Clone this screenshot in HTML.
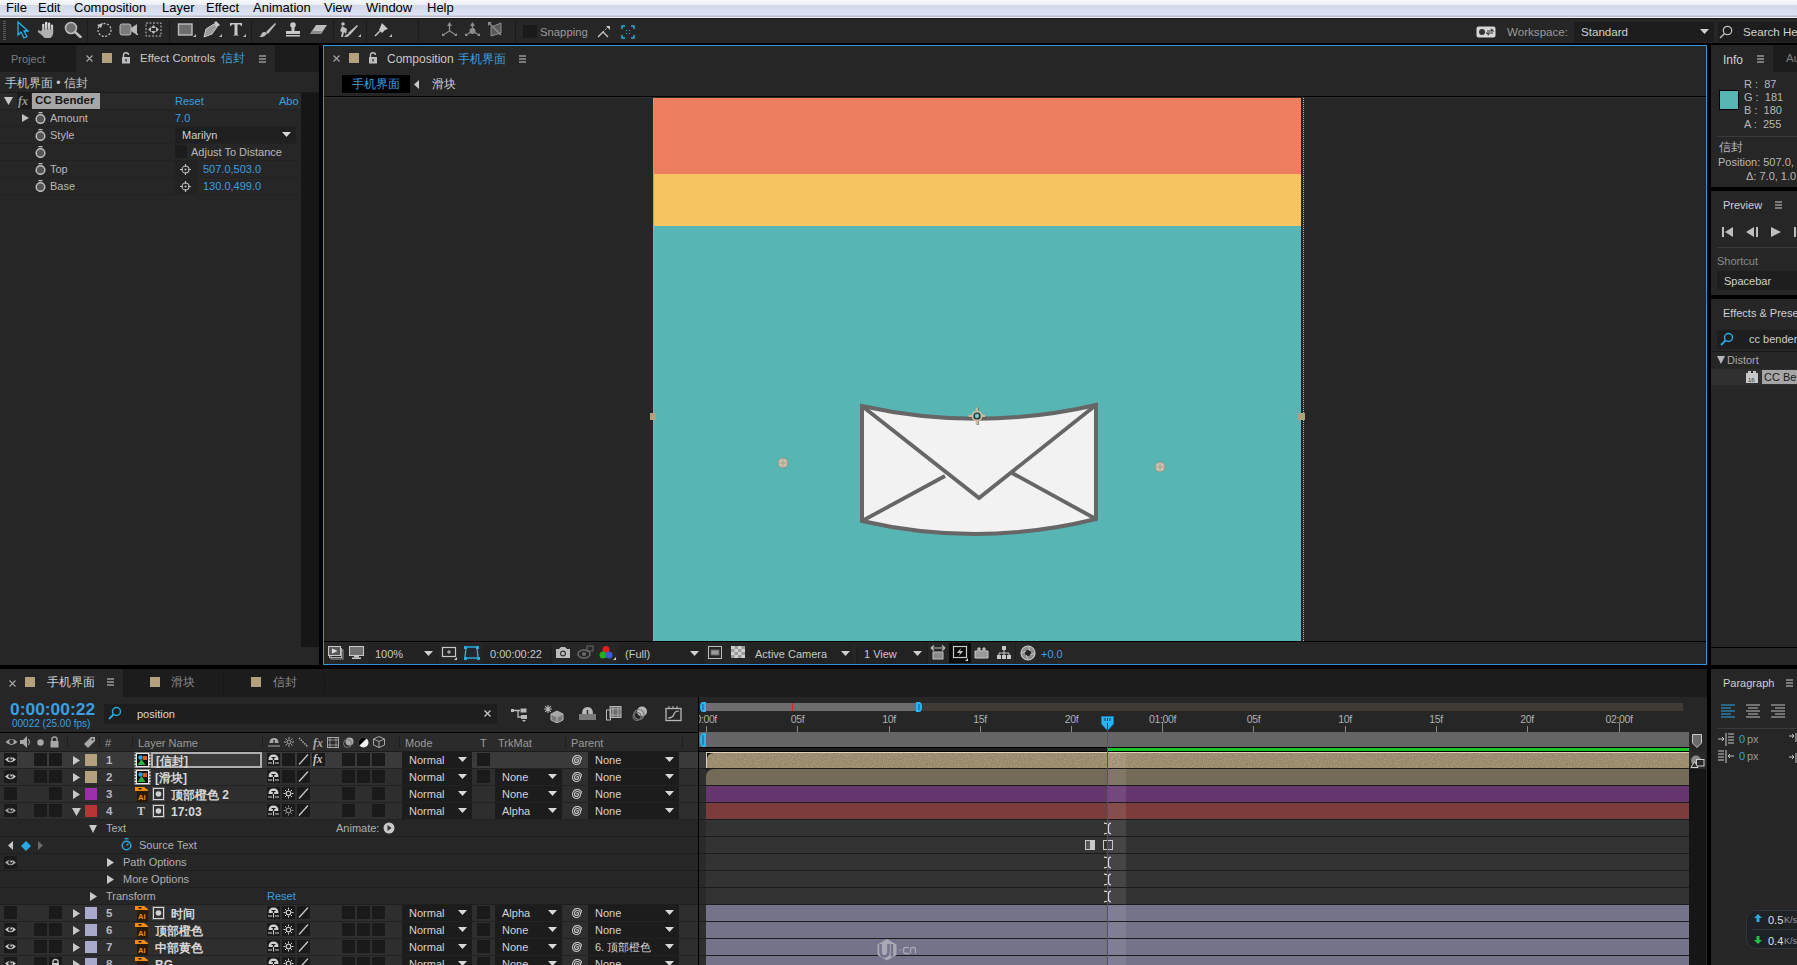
<!DOCTYPE html>
<html><head><meta charset="utf-8">
<style>
*{margin:0;padding:0;box-sizing:border-box}
html,body{width:1797px;height:965px;overflow:hidden;background:#000;font-family:"Liberation Sans",sans-serif;font-size:11px;color:#b4b4b4}
.a{position:absolute;display:block}
.t{position:absolute;white-space:nowrap;line-height:1}
</style></head><body>
<div class="a" style="left:0;top:0;width:1797px;height:18px;background:linear-gradient(#f8f9fd 0px,#eceef7 4.5px,#d4d9ea 5.2px,#dde2f2 15px,#b9bed0 16px,#b9bed0 17px)"></div>
<div class="a" style="left:0px;top:17px;width:1797px;height:1px;background:#f2f2f2;"></div>
<div class="a" style="left:0px;top:18px;width:1797px;height:1px;background:#1b1b1b;"></div>
<span class="t " style="left:6px;top:1.26px;font-size:13px;color:#000;">File</span>
<span class="t " style="left:38px;top:1.26px;font-size:13px;color:#000;">Edit</span>
<span class="t " style="left:74px;top:1.26px;font-size:13px;color:#000;">Composition</span>
<span class="t " style="left:162px;top:1.26px;font-size:13px;color:#000;">Layer</span>
<span class="t " style="left:206px;top:1.26px;font-size:13px;color:#000;">Effect</span>
<span class="t " style="left:253px;top:1.26px;font-size:13px;color:#000;">Animation</span>
<span class="t " style="left:324px;top:1.26px;font-size:13px;color:#000;">View</span>
<span class="t " style="left:366px;top:1.26px;font-size:13px;color:#000;">Window</span>
<span class="t " style="left:427px;top:1.26px;font-size:13px;color:#000;">Help</span>
<div class="a" style="left:0px;top:19px;width:1797px;height:24px;background:#262626;"></div>
<div class="a" style="left:0px;top:43px;width:1797px;height:2px;background:#000;"></div>
<div class="a" style="left:3px;top:21px;width:3px;height:20px;background:repeating-linear-gradient(#5a5a5a 0 1px,transparent 1px 2px)"></div>
<svg class="a" style="left:16px;top:21px;" width="13" height="18" viewBox="0 0 13 18"><path d="M2 1L2 14L5 11L8 17L11 15.5L8 10L12 10Z" fill="#11242c" stroke="#28b4e8" stroke-width="1.3"/></svg>
<svg class="a" style="left:37px;top:21px;" width="19" height="18" viewBox="0 0 19 18"><defs><linearGradient id="hg" x1="0" y1="0" x2="0" y2="1"><stop offset="0" stop-color="#e4e4e4"/><stop offset="1" stop-color="#9a9a9a"/></linearGradient></defs><g stroke="url(#hg)" stroke-linecap="round" fill="none" stroke-width="2.3"><path d="M6.3 9V3.8M9.2 8.5V1.8M12.1 8.5V2.6M15 9.5V4.6M2 10.5L5.5 13"/></g><path d="M4.8 8.5H16.2V12.5Q15.5 16 13.5 17H7.5L3.5 12.5Z" fill="#b0b0b0"/></svg>
<svg class="a" style="left:64px;top:21px;" width="18" height="17" viewBox="0 0 18 17"><circle cx="7" cy="7" r="5.5" fill="#707070" stroke="#bdbdbd" stroke-width="1.6"/><path d="M11 11L16.5 16" stroke="#bdbdbd" stroke-width="2.6" stroke-linecap="round"/></svg>
<div class="a" style="left:87px;top:20px;width:1px;height:22px;background:#1a1a1a;"></div>
<svg class="a" style="left:96px;top:21px;" width="17" height="17" viewBox="0 0 17 17"><circle cx="8.5" cy="9" r="6.5" fill="none" stroke="#bdbdbd" stroke-width="1.3" stroke-dasharray="2 1.6"/><path d="M1 4L7 2L5 7Z" fill="#bdbdbd"/></svg>
<svg class="a" style="left:119px;top:22px;" width="20" height="15" viewBox="0 0 20 15"><rect x="1" y="2" width="11" height="11" rx="2" fill="#7a7a7a" stroke="#b8b8b8"/><path d="M12 6L18 2V13L12 9Z" fill="#b8b8b8"/><path d="M17 13H19V11Z" fill="#bbb"/></svg>
<svg class="a" style="left:145px;top:22px;" width="18" height="16" viewBox="0 0 18 16"><rect x="1" y="1" width="15" height="13" fill="none" stroke="#bdbdbd" stroke-dasharray="2 1.5"/><path d="M8.5 3L11 6H6ZM8.5 12L11 9H6ZM3 7.5L6 5V10ZM14 7.5L11 5V10Z" fill="#bdbdbd"/></svg>
<div class="a" style="left:169px;top:20px;width:1px;height:22px;background:#1a1a1a;"></div>
<svg class="a" style="left:177px;top:22px;" width="19" height="16" viewBox="0 0 19 16"><rect x="1.5" y="2" width="13.5" height="11" fill="#6e6e6e" stroke="#bdbdbd" stroke-width="1.4"/><path d="M16 15H19V12Z" fill="#bbb"/></svg>
<svg class="a" style="left:202px;top:21px;" width="20" height="17" viewBox="0 0 20 17"><path d="M2 16L4 8L12 3L15 6L10 13Z" fill="#9a9a9a" stroke="#c8c8c8" stroke-width="1"/><path d="M12 2L14 0L18 4L15 6Z" fill="#c8c8c8"/><path d="M17 16H20V13Z" fill="#bbb"/></svg>
<svg class="a" style="left:228px;top:21px;" width="18" height="17" viewBox="0 0 18 17"><path d="M2 2H14V5H13L12 3.5H9.5V13.5L11 14.5H5L6.5 13.5V3.5H4L3 5H2Z" fill="#c8c8c8"/><path d="M15 16H18V13Z" fill="#bbb"/></svg>
<div class="a" style="left:251px;top:20px;width:1px;height:22px;background:#1a1a1a;"></div>
<svg class="a" style="left:258px;top:21px;" width="20" height="17" viewBox="0 0 20 17"><path d="M8 11L17 2L18 3L10 13Z" fill="#bdbdbd"/><path d="M1 16Q3 15 4 12Q6 10 9 12Q8 15 4 16Z" fill="#bdbdbd"/></svg>
<svg class="a" style="left:284px;top:21px;" width="18" height="17" viewBox="0 0 18 17"><circle cx="9" cy="4" r="2.8" fill="#c8c8c8"/><rect x="7.5" y="6" width="3" height="5" fill="#c8c8c8"/><rect x="2" y="10" width="14" height="3" fill="#c8c8c8"/><rect x="2" y="14" width="14" height="1.5" fill="#c8c8c8"/></svg>
<svg class="a" style="left:309px;top:22px;" width="19" height="15" viewBox="0 0 19 15"><path d="M1 12L7 3H18L12 12Z" fill="#bdbdbd"/><path d="M1 12L3 9H13L12 12Z" fill="#8a8a8a"/></svg>
<div class="a" style="left:333px;top:20px;width:1px;height:22px;background:#1a1a1a;"></div>
<svg class="a" style="left:338px;top:21px;" width="23" height="17" viewBox="0 0 23 17"><circle cx="5" cy="3" r="1.8" fill="#bdbdbd"/><path d="M4 5L2 10L4 11L3 16L5 16L6 11L8 13L9 8Z" fill="#bdbdbd"/><path d="M10 12L19 4L20 5L12 14Z" fill="#bdbdbd"/><path d="M6 16Q9 12 12 13Q11 16 8 16Z" fill="#bdbdbd"/><path d="M20 16H23V13Z" fill="#bbb"/></svg>
<div class="a" style="left:366px;top:20px;width:1px;height:22px;background:#1a1a1a;"></div>
<svg class="a" style="left:373px;top:21px;" width="19" height="17" viewBox="0 0 19 17"><path d="M9 2L15 8L12 9L9 12L6 9Z" fill="#c8c8c8"/><path d="M7 10L2 15" stroke="#c8c8c8" stroke-width="1.5"/><path d="M16 16H19V13Z" fill="#bbb"/></svg>
<div class="a" style="left:418px;top:20px;width:1px;height:22px;background:#1a1a1a;"></div>
<svg class="a" style="left:441px;top:22px;" width="17" height="15" viewBox="0 0 17 15"><path d="M8.5 1V9M8.5 9L2 13M8.5 9L15 13" stroke="#8d8d8d" stroke-width="1.3" fill="none"/><path d="M6 4L8.5 0L11 4Z" fill="#8d8d8d"/><path d="M1 11V14H4ZM16 11V14H13Z" fill="#8d8d8d"/></svg>
<svg class="a" style="left:464px;top:22px;" width="17" height="15" viewBox="0 0 17 15"><path d="M8.5 1V9M8.5 9L2 13M8.5 9L15 13" stroke="#8d8d8d" stroke-width="1.3" fill="none"/><path d="M6 4L8.5 0L11 4Z" fill="#8d8d8d"/><circle cx="8.5" cy="9" r="3" fill="#8d8d8d"/><path d="M1 11V14H4ZM16 11V14H13Z" fill="#8d8d8d"/></svg>
<svg class="a" style="left:488px;top:22px;" width="16" height="15" viewBox="0 0 16 15"><path d="M3 5L13 1V11L3 14Z" fill="#5a5a5a" stroke="#8d8d8d"/><path d="M1 1L13 13" stroke="#8d8d8d" stroke-width="1.4"/><path d="M0 0H4L0 4Z" fill="#8d8d8d"/></svg>
<div class="a" style="left:515px;top:20px;width:1px;height:22px;background:#1a1a1a;"></div>
<div class="a" style="left:523px;top:25px;width:14px;height:13px;background:#1a1a1a;"></div>
<span class="t " style="left:540px;top:27.08px;font-size:11.3px;color:#9a9a9a;">Snapping</span>
<svg class="a" style="left:597px;top:25px;" width="14" height="13" viewBox="0 0 14 13"><path d="M1 12L6 7L11 12" stroke="#c8c8c8" stroke-width="1.3" fill="none"/><path d="M6 7L12 1" stroke="#c8c8c8" stroke-width="1" stroke-dasharray="1.5 1"/><path d="M9 1H13V5Z" fill="#c8c8c8"/></svg>
<svg class="a" style="left:621px;top:25px;" width="14" height="14" viewBox="0 0 14 14"><path d="M1 4V1H4M10 1H13V4M13 10V13H10M4 13H1V10" stroke="#2aa8e0" stroke-width="1.5" fill="none"/><path d="M5 5L6 6M9 5L8 6M5 9L6 8M9 9L8 8" stroke="#2aa8e0" stroke-width="1"/></svg>
<svg class="a" style="left:1476px;top:26px;" width="20" height="12" viewBox="0 0 20 12"><rect x="0.5" y="0.5" width="19" height="11" rx="2" fill="#d6d6d6"/><circle cx="6" cy="6" r="3" fill="#333"/><path d="M11 5H17L15 3M17 7H11L13 9" stroke="#333" stroke-width="1.2" fill="none"/></svg>
<span class="t " style="left:1507px;top:25.93px;font-size:11.6px;color:#9a9a9a;">Workspace:</span>
<div class="a" style="left:1574px;top:22px;width:140px;height:20px;background:#1d1d1d;"></div>
<span class="t " style="left:1581px;top:25.93px;font-size:11.6px;color:#d0d0d0;">Standard</span>
<svg class="a" style="left:1700px;top:29px;" width="9" height="5" viewBox="0 0 9 5"><path d="M0 0H9L4.5 5Z" fill="#d0d0d0"/></svg>
<div class="a" style="left:1718px;top:22px;width:79px;height:20px;background:#1d1d1d;"></div>
<svg class="a" style="left:1719px;top:25px;" width="14" height="14" viewBox="0 0 14 14"><circle cx="8.5" cy="5.5" r="4.2" fill="none" stroke="#bdbdbd" stroke-width="1.3"/><path d="M5.5 8.5L1 13" stroke="#bdbdbd" stroke-width="1.5"/></svg>
<span class="t " style="left:1743px;top:25.73px;font-size:11.6px;color:#d0d0d0;">Search Help</span>
<div class="a" style="left:0px;top:45px;width:319px;height:620px;background:#262626;"></div>
<div class="a" style="left:0px;top:45px;width:76px;height:27px;background:#1c1c1c;"></div>
<div class="a" style="left:76px;top:45px;width:199px;height:27px;background:#262626;"></div>
<div class="a" style="left:275px;top:45px;width:44px;height:27px;background:#1c1c1c;"></div>
<span class="t " style="left:11px;top:53.72px;font-size:11px;color:#7c7c7c;">Project</span>
<svg class="a" style="left:86px;top:55px;" width="7" height="7" viewBox="0 0 7 7"><path d="M0.5 0.5L6.5 6.5M6.5 0.5L0.5 6.5" stroke="#a8a8a8" stroke-width="1.1"/></svg>
<div class="a" style="left:102px;top:53px;width:10px;height:10px;background:#b4a07c;"></div>
<svg class="a" style="left:121px;top:52px;" width="10" height="12" viewBox="0 0 10 12"><path d="M2.5 5V3Q2.5 0.8 5 0.8Q7.5 0.8 7.5 3" fill="none" stroke="#bdbdbd" stroke-width="1.4"/><rect x="1" y="5" width="8" height="6.5" fill="#bdbdbd"/><rect x="4.3" y="7" width="1.4" height="2.5" fill="#333"/></svg>
<span class="t " style="left:140px;top:53.48px;font-size:11.5px;color:#c8c8c8;">Effect Controls</span>
<span class="t " style="left:221px;top:53.48px;font-size:11.5px;color:#3a9fe0;">信封</span>
<svg class="a" style="left:259px;top:55px;" width="7" height="8" viewBox="0 0 7 8"><path d="M0 1H7M0 4H7M0 7H7" stroke="#d0d0d0" stroke-width="1.1"/></svg>
<span class="t " style="left:5px;top:77.24px;font-size:12px;color:#c8c8c8;">手机界面 • 信封</span>
<div class="a" style="left:0px;top:92px;width:319px;height:1px;background:#1a1a1a;"></div>
<div class="a" style="left:301px;top:93px;width:18px;height:554px;background:#161616;"></div>
<div class="a" style="left:0px;top:93px;width:301px;height:16px;background:#2a2a2a;"></div>
<div class="a" style="left:0px;top:109px;width:301px;height:1px;background:#222222;"></div>
<div class="a" style="left:0px;top:110px;width:301px;height:16px;background:#262626;"></div>
<div class="a" style="left:0px;top:126px;width:301px;height:1px;background:#222222;"></div>
<div class="a" style="left:0px;top:127px;width:301px;height:16px;background:#262626;"></div>
<div class="a" style="left:0px;top:143px;width:301px;height:1px;background:#222222;"></div>
<div class="a" style="left:0px;top:144px;width:301px;height:16px;background:#262626;"></div>
<div class="a" style="left:0px;top:160px;width:301px;height:1px;background:#222222;"></div>
<div class="a" style="left:0px;top:161px;width:301px;height:16px;background:#262626;"></div>
<div class="a" style="left:0px;top:177px;width:301px;height:1px;background:#222222;"></div>
<div class="a" style="left:0px;top:178px;width:301px;height:16px;background:#262626;"></div>
<div class="a" style="left:0px;top:194px;width:301px;height:1px;background:#222222;"></div>
<svg class="a" style="left:4px;top:97px;" width="9" height="8" viewBox="0 0 9 8"><path d="M0 0H9L4.5 8Z" fill="#c8c8c8"/></svg>
<div class="a" style="left:17px;top:93px;width:14px;height:16px;background:#1c1c1c;"></div>
<span class="t " style="left:18px;top:95.24px;font-size:12px;color:#9a9a9a;font-family:&quot;Liberation Serif&quot;;font-weight:bold"><i>fx</i></span>
<div class="a" style="left:32px;top:93px;width:68px;height:16px;background:#a6a6a6;"></div>
<span class="t " style="left:35px;top:95.48px;font-size:11.5px;color:#161616;font-weight:bold">CC Bender</span>
<span class="t " style="left:175px;top:95.72px;font-size:11px;color:#3a9fe0;">Reset</span>
<span class="t " style="left:279px;top:95.72px;font-size:11px;color:#3a9fe0;">Abo</span>
<svg class="a" style="left:22px;top:114px;" width="7" height="8" viewBox="0 0 7 8"><path d="M0 0L7 4.0L0 8Z" fill="#c0c0c0"/></svg>
<svg class="a" style="left:35px;top:112px;" width="11" height="12" viewBox="0 0 11 12"><rect x="3.5" y="0" width="4" height="1.3" fill="#bdbdbd"/><circle cx="5.5" cy="7" r="4.3" fill="#555" stroke="#bdbdbd" stroke-width="1.5"/></svg>
<span class="t " style="left:50px;top:112.72px;font-size:11px;color:#b8b8b8;">Amount</span>
<span class="t " style="left:175px;top:112.72px;font-size:11px;color:#3a9fe0;">7.0</span>
<svg class="a" style="left:35px;top:129px;" width="11" height="12" viewBox="0 0 11 12"><rect x="3.5" y="0" width="4" height="1.3" fill="#bdbdbd"/><circle cx="5.5" cy="7" r="4.3" fill="#555" stroke="#bdbdbd" stroke-width="1.5"/></svg>
<span class="t " style="left:50px;top:129.72px;font-size:11px;color:#b8b8b8;">Style</span>
<div class="a" style="left:175px;top:127px;width:121px;height:16px;background:#1f1f1f;"></div>
<span class="t " style="left:182px;top:129.72px;font-size:11px;color:#d0d0d0;">Marilyn</span>
<svg class="a" style="left:282px;top:132px;" width="9" height="5" viewBox="0 0 9 5"><path d="M0 0H9L4.5 5Z" fill="#d6d6d6"/></svg>
<svg class="a" style="left:35px;top:146px;" width="11" height="12" viewBox="0 0 11 12"><rect x="3.5" y="0" width="4" height="1.3" fill="#bdbdbd"/><circle cx="5.5" cy="7" r="4.3" fill="#555" stroke="#bdbdbd" stroke-width="1.5"/></svg>
<div class="a" style="left:175px;top:145px;width:12px;height:13px;background:#1c1c1c;"></div>
<span class="t " style="left:191px;top:146.72px;font-size:11px;color:#b8b8b8;">Adjust To Distance</span>
<svg class="a" style="left:35px;top:163px;" width="11" height="12" viewBox="0 0 11 12"><rect x="3.5" y="0" width="4" height="1.3" fill="#bdbdbd"/><circle cx="5.5" cy="7" r="4.3" fill="#555" stroke="#bdbdbd" stroke-width="1.5"/></svg>
<span class="t " style="left:50px;top:163.72px;font-size:11px;color:#b8b8b8;">Top</span>
<div class="a" style="left:175px;top:161px;width:22px;height:16px;background:#222;"></div>
<svg class="a" style="left:180px;top:164px;" width="11" height="11" viewBox="0 0 11 11"><circle cx="5.5" cy="5.5" r="3.5" fill="none" stroke="#bdbdbd" stroke-width="1.1"/><path d="M5.5 0V3M5.5 8V11M0 5.5H3M8 5.5H11" stroke="#bdbdbd" stroke-width="1.1"/><circle cx="5.5" cy="5.5" r="1" fill="#bdbdbd"/></svg>
<span class="t " style="left:203px;top:163.72px;font-size:11px;color:#3a9fe0;">507.0,503.0</span>
<svg class="a" style="left:35px;top:180px;" width="11" height="12" viewBox="0 0 11 12"><rect x="3.5" y="0" width="4" height="1.3" fill="#bdbdbd"/><circle cx="5.5" cy="7" r="4.3" fill="#555" stroke="#bdbdbd" stroke-width="1.5"/></svg>
<span class="t " style="left:50px;top:180.72px;font-size:11px;color:#b8b8b8;">Base</span>
<div class="a" style="left:175px;top:178px;width:22px;height:16px;background:#222;"></div>
<svg class="a" style="left:180px;top:181px;" width="11" height="11" viewBox="0 0 11 11"><circle cx="5.5" cy="5.5" r="3.5" fill="none" stroke="#bdbdbd" stroke-width="1.1"/><path d="M5.5 0V3M5.5 8V11M0 5.5H3M8 5.5H11" stroke="#bdbdbd" stroke-width="1.1"/><circle cx="5.5" cy="5.5" r="1" fill="#bdbdbd"/></svg>
<span class="t " style="left:203px;top:180.72px;font-size:11px;color:#3a9fe0;">130.0,499.0</span>
<div class="a" style="left:0px;top:665px;width:319px;height:4px;background:#000;"></div>
<div class="a" style="left:323px;top:45px;width:1384px;height:620px;background:#3394d4;"></div>
<div class="a" style="left:324px;top:46px;width:1382px;height:618px;background:#262626;"></div>
<svg class="a" style="left:333px;top:55px;" width="7" height="7" viewBox="0 0 7 7"><path d="M0.5 0.5L6.5 6.5M6.5 0.5L0.5 6.5" stroke="#a8a8a8" stroke-width="1.1"/></svg>
<div class="a" style="left:349px;top:53px;width:10px;height:10px;background:#b4a07c;"></div>
<svg class="a" style="left:368px;top:52px;" width="10" height="12" viewBox="0 0 10 12"><path d="M2.5 5V3Q2.5 0.8 5 0.8Q7.5 0.8 7.5 3" fill="none" stroke="#bdbdbd" stroke-width="1.4"/><rect x="1" y="5" width="8" height="6.5" fill="#bdbdbd"/><rect x="4.3" y="7" width="1.4" height="2.5" fill="#333"/></svg>
<span class="t " style="left:387px;top:53.24px;font-size:12px;color:#c8c8c8;">Composition</span>
<span class="t " style="left:458px;top:53.24px;font-size:12px;color:#3a9fe0;">手机界面</span>
<svg class="a" style="left:519px;top:55px;" width="7" height="8" viewBox="0 0 7 8"><path d="M0 1H7M0 4H7M0 7H7" stroke="#d0d0d0" stroke-width="1.1"/></svg>
<div class="a" style="left:342px;top:75px;width:68px;height:18px;background:#000;"></div>
<span class="t " style="left:352px;top:78.24px;font-size:12px;color:#3a9fe0;">手机界面</span>
<svg class="a" style="left:414px;top:80px;" width="5" height="9" viewBox="0 0 5 9"><path d="M5 0L0 4.5L5 9Z" fill="#c8c8c8"/></svg>
<span class="t " style="left:432px;top:78.24px;font-size:12px;color:#d0d0d0;">滑块</span>
<div class="a" style="left:324px;top:96px;width:1382px;height:1px;background:#000;"></div>
<div class="a" style="left:324px;top:97px;width:1382px;height:1px;background:#313131;"></div>
<div class="a" style="left:653px;top:98px;width:648px;height:76px;background:#ee7e60;"></div>
<div class="a" style="left:653px;top:174px;width:648px;height:52px;background:#f6c562;"></div>
<div class="a" style="left:653px;top:226px;width:648px;height:415px;background:#57b5b4;"></div>
<div class="a" style="left:653px;top:98px;width:1px;height:543px;background:#a49ec0;"></div>
<div class="a" style="left:1303px;top:98px;width:1px;height:543px;background:repeating-linear-gradient(#b8b0d0 0 1px,#262626 1px 2px)"></div>
<div class="a" style="left:650px;top:413px;width:6px;height:7px;background:#b4a07c;"></div>
<div class="a" style="left:1298px;top:413px;width:7px;height:7px;background:#b4a07c;"></div>
<svg class="a" style="left:853px;top:395px;" width="255" height="150" viewBox="0 0 255 150"><g transform="translate(-853,-395)">
<path d="M862 406 Q979 432 1096 405 L1096 519 Q979 548 862 521 Z" fill="#f2f2f2" stroke="#666" stroke-width="4" stroke-linejoin="miter"/>
<path d="M862 406 L979 498 L1096 405" fill="none" stroke="#666" stroke-width="3.8"/>
<path d="M862 521 L945 476 M1096 519 L1012 473" fill="none" stroke="#666" stroke-width="3.8"/>
</g></svg>
<svg class="a" style="left:968px;top:407px;" width="18" height="18" viewBox="0 0 18 18"><g transform="translate(0.7,0.7)" opacity="0.5"><rect x="7.75" y="0" width="2.5" height="18" fill="#111"/><rect x="0" y="7.75" width="18" height="2.5" fill="#111"/></g><rect x="7.75" y="0.5" width="2.5" height="17" fill="#c9bca0"/><rect x="0.5" y="7.75" width="17" height="2.5" fill="#c9bca0"/><circle cx="9" cy="9" r="4.6" fill="none" stroke="#c9bca0" stroke-width="1.8"/><circle cx="9" cy="9" r="3" fill="#57b5b4" stroke="#1e2a2a" stroke-width="1.2"/><circle cx="9" cy="9" r="1" fill="#b8c8c0"/></svg>
<svg class="a" style="left:777px;top:457px;" width="12" height="12" viewBox="0 0 12 12"><circle cx="6" cy="6" r="5" fill="#c9c3ad" stroke="#8d8a80" stroke-width="0.8"/><path d="M6 2V10M2 6H10" stroke="#a09c8c" stroke-width="0.8"/></svg>
<svg class="a" style="left:1154px;top:461px;" width="12" height="12" viewBox="0 0 12 12"><circle cx="6" cy="6" r="5" fill="#c9c3ad" stroke="#8d8a80" stroke-width="0.8"/><path d="M6 2V10M2 6H10" stroke="#a09c8c" stroke-width="0.8"/></svg>
<div class="a" style="left:324px;top:641px;width:1382px;height:1px;background:#000;"></div>
<div class="a" style="left:324px;top:642px;width:1382px;height:22px;background:#262626;"></div>
<div class="a" style="left:368px;top:643px;width:70px;height:21px;background:#222222;"></div>
<div class="a" style="left:482px;top:643px;width:70px;height:21px;background:#222222;"></div>
<div class="a" style="left:618px;top:643px;width:87px;height:21px;background:#222222;"></div>
<div class="a" style="left:750px;top:643px;width:103px;height:21px;background:#222222;"></div>
<div class="a" style="left:856px;top:643px;width:71px;height:21px;background:#222222;"></div>
<svg class="a" style="left:328px;top:646px;" width="17" height="14" viewBox="0 0 17 14"><rect x="3" y="4" width="12" height="9" fill="none" stroke="#9a9a9a"/><rect x="1.5" y="2.5" width="12" height="9" fill="none" stroke="#aaa"/><rect x="0.5" y="0.5" width="12" height="9" fill="#5a5a5a" stroke="#c8c8c8"/><path d="M4 2.5L9.5 5L4 7.5Z" fill="#e0e0e0"/></svg>
<svg class="a" style="left:349px;top:646px;" width="15" height="13" viewBox="0 0 15 13"><rect x="0.5" y="0.5" width="14" height="9" fill="#707070" stroke="#c8c8c8"/><rect x="5" y="10" width="5" height="1.5" fill="#c8c8c8"/><rect x="3" y="11.5" width="9" height="1.5" fill="#c8c8c8"/></svg>
<span class="t " style="left:375px;top:649.22px;font-size:11px;color:#c8c8c8;">100%</span>
<svg class="a" style="left:424px;top:651px;" width="9" height="5" viewBox="0 0 9 5"><path d="M0 0H9L4.5 5Z" fill="#d0d0d0"/></svg>
<div class="a" style="left:438px;top:643px;width:1px;height:20px;background:#1e1e1e;"></div>
<svg class="a" style="left:441px;top:646px;" width="16" height="14" viewBox="0 0 16 14"><rect x="1.5" y="1.5" width="13" height="9" fill="none" stroke="#c8c8c8" stroke-width="1.2"/><path d="M8 4V8M6 6H10" stroke="#c8c8c8"/><path d="M13 14H16V11Z" fill="#ccc"/></svg>
<svg class="a" style="left:463px;top:645px;" width="17" height="16" viewBox="0 0 17 16"><path d="M3 2H14L15 13H2Z" fill="none" stroke="#2aa8e0" stroke-width="1.4"/><rect x="1" y="1" width="3" height="3" fill="#2aa8e0"/><rect x="13" y="1" width="3" height="3" fill="#2aa8e0"/><rect x="1" y="12" width="3" height="3" fill="#2aa8e0"/><rect x="14" y="12" width="3" height="3" fill="#2aa8e0"/></svg>
<span class="t " style="left:490px;top:649.22px;font-size:11px;color:#c8c8c8;">0:00:00:22</span>
<div class="a" style="left:551px;top:643px;width:1px;height:20px;background:#1e1e1e;"></div>
<svg class="a" style="left:555px;top:646px;" width="16" height="13" viewBox="0 0 16 13"><path d="M1 3H4L6 1H10L12 3H15V12H1Z" fill="#bdbdbd"/><circle cx="8" cy="7.5" r="3" fill="#333"/><circle cx="8" cy="7.5" r="1.8" fill="#bdbdbd"/></svg>
<svg class="a" style="left:577px;top:645px;" width="17" height="14" viewBox="0 0 17 14"><ellipse cx="7" cy="9" rx="6" ry="4" fill="none" stroke="#6a6a6a" stroke-width="1.5"/><circle cx="7" cy="9" r="2" fill="#6a6a6a"/><rect x="10" y="1" width="6" height="5" fill="none" stroke="#6a6a6a"/></svg>
<svg class="a" style="left:598px;top:645px;" width="18" height="15" viewBox="0 0 18 15"><circle cx="8" cy="4.5" r="3.5" fill="#e02020"/><circle cx="5" cy="10" r="3.5" fill="#20b020"/><circle cx="11" cy="10" r="3.5" fill="#3a5ad8"/><path d="M15 15H18V12Z" fill="#ccc"/></svg>
<span class="t " style="left:625px;top:649.22px;font-size:11px;color:#c8c8c8;">(Full)</span>
<svg class="a" style="left:690px;top:651px;" width="9" height="5" viewBox="0 0 9 5"><path d="M0 0H9L4.5 5Z" fill="#d0d0d0"/></svg>
<div class="a" style="left:702px;top:643px;width:1px;height:20px;background:#1e1e1e;"></div>
<svg class="a" style="left:708px;top:646px;" width="14" height="13" viewBox="0 0 14 13"><rect x="0.5" y="0.5" width="13" height="12" fill="none" stroke="#bdbdbd"/><rect x="3" y="4" width="8" height="5" fill="#9a9a9a" stroke="#666"/></svg>
<svg class="a" style="left:731px;top:646px;" width="14" height="12" viewBox="0 0 14 12"><rect x="0" y="0" width="14" height="12" fill="#9a9a9a"/><path d="M0 0H3.5V3H0ZM7 0H10.5V3H7ZM3.5 3H7V6H3.5ZM10.5 3H14V6H10.5ZM0 6H3.5V9H0ZM7 6H10.5V9H7ZM3.5 9H7V12H3.5ZM10.5 9H14V12H10.5Z" fill="#d0d0d0"/></svg>
<span class="t " style="left:755px;top:649.22px;font-size:11px;color:#c8c8c8;">Active Camera</span>
<svg class="a" style="left:841px;top:651px;" width="9" height="5" viewBox="0 0 9 5"><path d="M0 0H9L4.5 5Z" fill="#d0d0d0"/></svg>
<div class="a" style="left:856px;top:643px;width:1px;height:20px;background:#1e1e1e;"></div>
<span class="t " style="left:864px;top:649.22px;font-size:11px;color:#c8c8c8;">1 View</span>
<svg class="a" style="left:913px;top:651px;" width="9" height="5" viewBox="0 0 9 5"><path d="M0 0H9L4.5 5Z" fill="#d0d0d0"/></svg>
<div class="a" style="left:927px;top:643px;width:1px;height:20px;background:#1e1e1e;"></div>
<svg class="a" style="left:930px;top:645px;" width="16" height="15" viewBox="0 0 16 15"><path d="M1 3H15M1 3L4 0.5M1 3L4 5.5M15 3L12 0.5M15 3L12 5.5" stroke="#bdbdbd" stroke-width="1.2" fill="none"/><rect x="3" y="7" width="10" height="7" fill="#8a8a8a" stroke="#bdbdbd"/></svg>
<div class="a" style="left:949px;top:643px;width:22px;height:20px;background:#0a0a0a;"></div>
<svg class="a" style="left:952px;top:645px;" width="16" height="16" viewBox="0 0 16 16"><rect x="1.5" y="1.5" width="13" height="11" fill="none" stroke="#c8c8c8" stroke-width="1.2"/><path d="M9 3L5 8H8L7 11L11 6H8Z" fill="#c8c8c8"/><path d="M13 16H16V13Z" fill="#ccc"/></svg>
<svg class="a" style="left:974px;top:646px;" width="15" height="13" viewBox="0 0 15 13"><path d="M1 12V5H4V2H6V5H9V2H11V5H14V12Z" fill="#9a9a9a" stroke="#c8c8c8"/></svg>
<svg class="a" style="left:996px;top:645px;" width="16" height="15" viewBox="0 0 16 15"><rect x="6" y="1" width="4" height="4" fill="#c8c8c8"/><path d="M8 5V8M3 8H13M3 8V10M13 8V10M8 8V10" stroke="#c8c8c8"/><rect x="1" y="10" width="4" height="4" fill="#c8c8c8"/><rect x="6" y="10" width="4" height="4" fill="#c8c8c8"/><rect x="11" y="10" width="4" height="4" fill="#c8c8c8"/></svg>
<div class="a" style="left:1015px;top:643px;width:1px;height:20px;background:#1e1e1e;"></div>
<svg class="a" style="left:1020px;top:645px;" width="16" height="16" viewBox="0 0 16 16"><circle cx="8" cy="8" r="7" fill="#8a8a8a" stroke="#c8c8c8" stroke-width="1.2"/><circle cx="8" cy="8" r="3" fill="#262626"/><path d="M8 1L10 6M15 8L10 10M8 15L6 10M1 8L6 6" stroke="#c8c8c8"/></svg>
<span class="t " style="left:1041px;top:649.22px;font-size:11px;color:#3a9fe0;">+0.0</span>
<div class="a" style="left:323px;top:664px;width:1384px;height:1px;background:#3394d4;"></div>
<div class="a" style="left:323px;top:665px;width:1388px;height:4px;background:#000;"></div>
<div class="a" style="left:1707px;top:45px;width:4px;height:920px;background:#000;"></div>
<div class="a" style="left:1711px;top:45px;width:86px;height:142px;background:#262626;"></div>
<div class="a" style="left:1773px;top:45px;width:24px;height:27px;background:#1c1c1c;"></div>
<span class="t " style="left:1723px;top:54.24px;font-size:12px;color:#d0d0d0;">Info</span>
<svg class="a" style="left:1757px;top:55px;" width="7" height="8" viewBox="0 0 7 8"><path d="M0 1H7M0 4H7M0 7H7" stroke="#d0d0d0" stroke-width="1.1"/></svg>
<span class="t " style="left:1786px;top:53.48px;font-size:11.5px;color:#7c7c7c;">Au</span>
<div class="a" style="left:1719px;top:90px;width:20px;height:20px;background:#000;"></div>
<div class="a" style="left:1720px;top:91px;width:18px;height:18px;background:#57b5b4;"></div>
<span class="t " style="left:1744px;top:78.72px;font-size:11px;color:#b8b8b8;">R :&nbsp;  87</span>
<span class="t " style="left:1744px;top:92.02px;font-size:11px;color:#b8b8b8;">G :&nbsp; 181</span>
<span class="t " style="left:1744px;top:105.32px;font-size:11px;color:#b8b8b8;">B :&nbsp; 180</span>
<span class="t " style="left:1744px;top:118.62px;font-size:11px;color:#b8b8b8;">A :&nbsp; 255</span>
<div class="a" style="left:1717px;top:136px;width:80px;height:1px;background:#3a3a3a;"></div>
<span class="t " style="left:1719px;top:141.24px;font-size:12px;color:#b8b8b8;">信封</span>
<span class="t " style="left:1718px;top:156.72px;font-size:11px;color:#b8b8b8;">Position: 507.0,</span>
<span class="t " style="left:1746px;top:170.72px;font-size:11px;color:#b8b8b8;">Δ: 7.0, 1.0</span>
<div class="a" style="left:1711px;top:187px;width:86px;height:4px;background:#000;"></div>
<div class="a" style="left:1711px;top:191px;width:86px;height:104px;background:#262626;"></div>
<span class="t " style="left:1723px;top:199.72px;font-size:11px;color:#d0d0d0;">Preview</span>
<svg class="a" style="left:1775px;top:201px;" width="7" height="8" viewBox="0 0 7 8"><path d="M0 1H7M0 4H7M0 7H7" stroke="#d0d0d0" stroke-width="1.1"/></svg>
<svg class="a" style="left:1722px;top:227px;" width="12" height="10" viewBox="0 0 12 10"><rect x="0" y="0" width="2" height="10" fill="#bdbdbd"/><path d="M11 0V10L3 5Z" fill="#bdbdbd"/></svg>
<svg class="a" style="left:1746px;top:227px;" width="13" height="10" viewBox="0 0 13 10"><path d="M8 0V10L0 5Z" fill="#bdbdbd"/><rect x="10" y="0" width="2" height="10" fill="#bdbdbd"/></svg>
<svg class="a" style="left:1771px;top:227px;" width="11" height="10" viewBox="0 0 11 10"><path d="M0 0V10L10 5Z" fill="#bdbdbd"/></svg>
<div class="a" style="left:1794px;top:227px;width:2px;height:10px;background:#bdbdbd;"></div>
<div class="a" style="left:1717px;top:247px;width:80px;height:1px;background:#3a3a3a;"></div>
<span class="t " style="left:1717px;top:255.72px;font-size:11px;color:#8a8a8a;">Shortcut</span>
<div class="a" style="left:1717px;top:271px;width:80px;height:19px;background:#1e1e1e;"></div>
<span class="t " style="left:1724px;top:275.72px;font-size:11px;color:#d0d0d0;">Spacebar</span>
<div class="a" style="left:1711px;top:295px;width:86px;height:4px;background:#000;"></div>
<div class="a" style="left:1711px;top:299px;width:86px;height:366px;background:#262626;"></div>
<span class="t " style="left:1723px;top:307.72px;font-size:11px;color:#d0d0d0;">Effects &amp; Presets</span>
<div class="a" style="left:1717px;top:330px;width:80px;height:19px;background:#1e1e1e;"></div>
<svg class="a" style="left:1720px;top:332px;" width="14" height="14" viewBox="0 0 14 14"><circle cx="8.5" cy="5.5" r="4" fill="none" stroke="#2aa8e0" stroke-width="1.5"/><path d="M5.5 8.5L1 13" stroke="#2aa8e0" stroke-width="1.8"/></svg>
<span class="t " style="left:1749px;top:333.72px;font-size:11px;color:#d0d0d0;">cc bender</span>
<div class="a" style="left:1711px;top:351px;width:86px;height:1px;background:#1a1a1a;"></div>
<svg class="a" style="left:1717px;top:356px;" width="8" height="8" viewBox="0 0 8 8"><path d="M0 0H8L4.0 8Z" fill="#b8b8b8"/></svg>
<span class="t " style="left:1727px;top:354.72px;font-size:11px;color:#a8a8a8;">Distort</span>
<div class="a" style="left:1711px;top:369px;width:86px;height:16px;background:#303030;"></div>
<svg class="a" style="left:1746px;top:371px;" width="13" height="12" viewBox="0 0 13 12"><rect x="0" y="2" width="12" height="10" fill="#c8c8c8"/><rect x="2" y="0" width="3" height="3" fill="#c8c8c8"/><rect x="7" y="0" width="3" height="3" fill="#c8c8c8"/><text x="2" y="10.5" font-size="6" fill="#333" font-family="Liberation Sans">16</text></svg>
<div class="a" style="left:1762px;top:370px;width:35px;height:14px;background:#a6a6a6;"></div>
<span class="t " style="left:1764px;top:371.72px;font-size:11px;color:#1a1a1a;">CC Bender</span>
<div class="a" style="left:1711px;top:647px;width:86px;height:1px;background:#000;"></div>
<div class="a" style="left:1711px;top:665px;width:86px;height:4px;background:#000;"></div>
<div class="a" style="left:1711px;top:669px;width:86px;height:296px;background:#262626;"></div>
<span class="t " style="left:1723px;top:677.72px;font-size:11px;color:#d0d0d0;">Paragraph</span>
<svg class="a" style="left:1786px;top:679px;" width="7" height="8" viewBox="0 0 7 8"><path d="M0 1H7M0 4H7M0 7H7" stroke="#d0d0d0" stroke-width="1.1"/></svg>
<svg class="a" style="left:1721px;top:704px;" width="14" height="14" viewBox="0 0 14 14"><path d="M0 1H14M0 4H10M0 7H14M0 10H10M0 13H14" stroke="#2aa8e0" stroke-width="1.2"/></svg>
<svg class="a" style="left:1746px;top:704px;" width="14" height="14" viewBox="0 0 14 14"><path d="M0 1H14M2 4H12M0 7H14M2 10H12M0 13H14" stroke="#bdbdbd" stroke-width="1.2"/></svg>
<svg class="a" style="left:1771px;top:704px;" width="14" height="14" viewBox="0 0 14 14"><path d="M0 1H14M4 4H14M0 7H14M4 10H14M0 13H14" stroke="#bdbdbd" stroke-width="1.2"/></svg>
<div class="a" style="left:1717px;top:728px;width:80px;height:1px;background:#3a3a3a;"></div>
<svg class="a" style="left:1718px;top:733px;" width="17" height="13" viewBox="0 0 17 13"><path d="M0 6H6M4 4L6 6L4 8" stroke="#c8c8c8" fill="none"/><path d="M8 0V13M10 1H16M10 4H16M10 7H16M10 10H16" stroke="#c8c8c8"/></svg>
<span class="t " style="left:1739px;top:733.72px;font-size:11px;color:#3a9fe0;">0</span>
<span class="t " style="left:1747px;top:733.72px;font-size:11px;color:#9a9a9a;">px</span>
<svg class="a" style="left:1718px;top:750px;" width="17" height="13" viewBox="0 0 17 13"><path d="M0 1H6M0 4H6M0 7H6M0 10H6M8 0V13" stroke="#c8c8c8"/><path d="M16 6H10M12 4L10 6L12 8" stroke="#c8c8c8" fill="none"/></svg>
<span class="t " style="left:1739px;top:750.72px;font-size:11px;color:#3a9fe0;">0</span>
<span class="t " style="left:1747px;top:750.72px;font-size:11px;color:#9a9a9a;">px</span>
<svg class="a" style="left:1789px;top:733px;" width="8" height="30" viewBox="0 0 8 30"><path d="M0 3H5M3 1L5 3L3 5M7 0V9M0 24H5M3 22L5 24L3 26M7 20V30" stroke="#c8c8c8" fill="none"/></svg>
<div class="a" style="left:1746px;top:910px;width:70px;height:39px;border-radius:10px 0 0 10px;background:#1e2226;border:1px solid #30363c"></div>
<div class="a" style="left:1752px;top:929px;width:45px;height:1px;background:#2f353b;"></div>
<svg class="a" style="left:1754px;top:914px;" width="8" height="8" viewBox="0 0 8 8"><path d="M4 0L8 4H5.5V8H2.5V4H0Z" fill="#2aa8e0"/></svg>
<span class="t " style="left:1768px;top:914.72px;font-size:11px;color:#e0e0e0;">0.5</span>
<span class="t " style="left:1784px;top:916.18px;font-size:9px;color:#9a9a9a;">K/s</span>
<svg class="a" style="left:1754px;top:936px;" width="8" height="8" viewBox="0 0 8 8"><path d="M4 8L8 4H5.5V0H2.5V4H0Z" fill="#20c040"/></svg>
<span class="t " style="left:1768px;top:935.72px;font-size:11px;color:#e0e0e0;">0.4</span>
<span class="t " style="left:1784px;top:937.18px;font-size:9px;color:#9a9a9a;">K/s</span>
<div class="a" style="left:0px;top:669px;width:1707px;height:296px;background:#262626;"></div>
<div class="a" style="left:0px;top:669px;width:1707px;height:28px;background:#1c1c1c;"></div>
<div class="a" style="left:0px;top:669px;width:123px;height:28px;background:#262626;"></div>
<div class="a" style="left:223px;top:673px;width:1px;height:22px;background:#151515;"></div>
<div class="a" style="left:324px;top:673px;width:1px;height:22px;background:#151515;"></div>
<svg class="a" style="left:9px;top:680px;" width="7" height="7" viewBox="0 0 7 7"><path d="M0.5 0.5L6.5 6.5M6.5 0.5L0.5 6.5" stroke="#a8a8a8" stroke-width="1.1"/></svg>
<div class="a" style="left:25px;top:677px;width:10px;height:10px;background:#b4a07c;"></div>
<span class="t " style="left:47px;top:676.24px;font-size:12px;color:#d0d0d0;">手机界面</span>
<svg class="a" style="left:107px;top:678px;" width="7" height="8" viewBox="0 0 7 8"><path d="M0 1H7M0 4H7M0 7H7" stroke="#d0d0d0" stroke-width="1.1"/></svg>
<div class="a" style="left:150px;top:677px;width:10px;height:10px;background:#b4a07c;"></div>
<span class="t " style="left:171px;top:676.24px;font-size:12px;color:#8a8a8a;">滑块</span>
<div class="a" style="left:251px;top:677px;width:10px;height:10px;background:#b4a07c;"></div>
<span class="t " style="left:273px;top:676.24px;font-size:12px;color:#8a8a8a;">信封</span>
<span class="t " style="left:10px;top:700.95px;font-size:17.4px;color:#3a9fe0;font-weight:bold">0:00:00:22</span>
<span class="t " style="left:12px;top:719.40px;font-size:10px;color:#3a9fe0;">00022 (25.00 fps)</span>
<div class="a" style="left:104px;top:704px;width:393px;height:20px;background:#1e1e1e;"></div>
<svg class="a" style="left:108px;top:706px;" width="14" height="14" viewBox="0 0 14 14"><circle cx="8.5" cy="5.5" r="4" fill="none" stroke="#2aa8e0" stroke-width="1.5"/><path d="M5.5 8.5L1 13" stroke="#2aa8e0" stroke-width="1.8"/></svg>
<span class="t " style="left:137px;top:708.72px;font-size:11px;color:#d8d8d8;">position</span>
<svg class="a" style="left:484px;top:710px;" width="7" height="7" viewBox="0 0 7 7"><path d="M0.5 0.5L6.5 6.5M6.5 0.5L0.5 6.5" stroke="#c8c8c8" stroke-width="1.2"/></svg>
<svg class="a" style="left:511px;top:707px;" width="17" height="15" viewBox="0 0 17 15"><path d="M0 3.5H6M6 3.5H9M7 3.5V10H10" stroke="#b8b8b8" fill="none" stroke-width="1.3"/><rect x="0" y="2" width="3" height="3" fill="#b8b8b8"/><rect x="9.5" y="1.5" width="6" height="4" fill="#b8b8b8"/><rect x="10" y="8" width="6" height="4" fill="#b8b8b8"/><path d="M11 13H15L13 15Z" fill="#b8b8b8"/></svg>
<svg class="a" style="left:544px;top:705px;" width="20" height="18" viewBox="0 0 20 18"><path d="M4 0V8M0 4H8M1.2 1.2L6.8 6.8M6.8 1.2L1.2 6.8" stroke="#b8b8b8" stroke-width="1.1"/><path d="M13 6L19 9V15L13 18L7 15V9Z" fill="#7a7a7a" stroke="#b8b8b8" stroke-width="1"/><path d="M7 9L13 12L19 9M13 12V18" stroke="#b8b8b8" fill="none"/><path d="M7.5 9L13 6L18.5 9L13 11.5Z" fill="#a8a8a8"/></svg>
<svg class="a" style="left:579px;top:706px;" width="17" height="14" viewBox="0 0 17 14"><path d="M3 8Q3 1 8.5 1Q14 1 14 8Z" fill="#b8b8b8"/><rect x="7.8" y="4" width="1.4" height="6" fill="#262626"/><rect x="0" y="8" width="17" height="6" fill="#7a7a7a"/></svg>
<svg class="a" style="left:606px;top:706px;" width="16" height="15" viewBox="0 0 16 15"><rect x="4" y="0.5" width="11" height="11" fill="#6a6a6a" stroke="#b8b8b8"/><path d="M4 3H15M4 9H15M7 0V12M12 0V12" stroke="#b8b8b8" stroke-width="0.8"/><rect x="0.5" y="4" width="4" height="10" fill="none" stroke="#b8b8b8"/></svg>
<svg class="a" style="left:632px;top:706px;" width="16" height="15" viewBox="0 0 16 15"><circle cx="10" cy="5.5" r="5" fill="#b8b8b8"/><circle cx="7" cy="8.5" r="5" fill="none" stroke="#7a7a7a" stroke-width="1.2"/><circle cx="5" cy="10.5" r="4" fill="none" stroke="#6a6a6a" stroke-width="1.2"/></svg>
<svg class="a" style="left:665px;top:706px;" width="17" height="16" viewBox="0 0 17 16"><rect x="1" y="2.5" width="15" height="12" fill="none" stroke="#b8b8b8" stroke-width="1.3"/><path d="M3 12Q8 12 9 8Q10 5 14 5" stroke="#b8b8b8" fill="none" stroke-width="1.2"/><path d="M4 0V3M8 0V3M12 0V3" stroke="#b8b8b8"/></svg>
<div class="a" style="left:0px;top:732px;width:698px;height:1px;background:#000;"></div>
<div class="a" style="left:0px;top:733px;width:698px;height:18px;background:#2b2b2b;"></div>
<div class="a" style="left:0px;top:751px;width:698px;height:1px;background:#1c1c1c;"></div>
<svg class="a" style="left:5px;top:737px;" width="13" height="10" viewBox="0 0 13 10"><path d="M0.5 5Q6.5 -1 12.5 5Q6.5 11 0.5 5Z" fill="#a8a8a8"/><circle cx="6.5" cy="4.8" r="2.3" fill="#2b2b2b"/></svg>
<svg class="a" style="left:20px;top:736px;" width="11" height="12" viewBox="0 0 11 12"><path d="M0 4H3L7 0V12L3 8H0Z" fill="#a8a8a8"/><path d="M8.5 3Q10.5 6 8.5 9" stroke="#a8a8a8" fill="none"/></svg>
<svg class="a" style="left:37px;top:739px;" width="7" height="7" viewBox="0 0 7 7"><circle cx="3.5" cy="3.5" r="3.2" fill="#a8a8a8"/></svg>
<svg class="a" style="left:50px;top:736px;" width="9" height="12" viewBox="0 0 9 12"><path d="M2 5V3Q2 1 4.5 1Q7 1 7 3V5" fill="none" stroke="#a8a8a8" stroke-width="1.4"/><rect x="0.5" y="5" width="8" height="6.5" fill="#a8a8a8"/></svg>
<div class="a" style="left:67px;top:737px;width:1px;height:10px;background:#1c1c1c;"></div>
<svg class="a" style="left:83px;top:736px;" width="13" height="13" viewBox="0 0 13 13"><path d="M1 8L8 1H12V5L5 12Z" fill="#a8a8a8"/><circle cx="9.5" cy="3.5" r="1" fill="#2b2b2b"/></svg>
<div class="a" style="left:99px;top:737px;width:1px;height:10px;background:#1c1c1c;"></div>
<span class="t " style="left:105px;top:737.72px;font-size:11px;color:#9a9a9a;">#</span>
<div class="a" style="left:132px;top:737px;width:1px;height:10px;background:#1c1c1c;"></div>
<span class="t " style="left:138px;top:737.72px;font-size:11px;color:#9a9a9a;">Layer Name</span>
<div class="a" style="left:262px;top:737px;width:1px;height:10px;background:#1c1c1c;"></div>
<svg class="a" style="left:268px;top:737px;" width="12" height="11" viewBox="0 0 12 11"><path d="M1.5 6Q1.5 1 6 1Q10.5 1 10.5 6Z" fill="#a8a8a8"/><rect x="5.3" y="3" width="1.4" height="6" fill="#2b2b2b"/><path d="M0 9H12" stroke="#a8a8a8"/></svg>
<svg class="a" style="left:284px;top:737px;" width="10" height="10" viewBox="0 0 10 10"><circle cx="5" cy="5" r="2" fill="none" stroke="#a8a8a8"/><path d="M5 0V2M5 8V10M0 5H2M8 5H10M1.5 1.5L3 3M7 7L8.5 8.5M1.5 8.5L3 7M7 3L8.5 1.5" stroke="#a8a8a8"/></svg>
<svg class="a" style="left:298px;top:737px;" width="11" height="11" viewBox="0 0 11 11"><path d="M1 1L10 10" stroke="#a8a8a8" stroke-width="1.5" stroke-dasharray="1.5 1"/></svg>
<span class="t " style="left:313px;top:737.24px;font-size:12px;color:#a8a8a8;font-family:&quot;Liberation Serif&quot;;font-weight:bold"><i>fx</i></span>
<svg class="a" style="left:327px;top:737px;" width="12" height="11" viewBox="0 0 12 11"><rect x="0.5" y="0.5" width="11" height="10" fill="none" stroke="#a8a8a8"/><path d="M0 3H12M0 8H12M3 0V11M9 0V11" stroke="#a8a8a8" stroke-width="0.8"/></svg>
<svg class="a" style="left:343px;top:737px;" width="11" height="11" viewBox="0 0 11 11"><circle cx="6.5" cy="4.5" r="4" fill="#a8a8a8"/><circle cx="4.5" cy="6.5" r="4" fill="none" stroke="#777"/></svg>
<svg class="a" style="left:358px;top:737px;" width="11" height="11" viewBox="0 0 11 11"><circle cx="5.5" cy="5.5" r="5" fill="#f0f0f0"/><path d="M1.5 8.5A5 5 0 0 1 8.5 1.5Z" fill="#000"/></svg>
<svg class="a" style="left:373px;top:736px;" width="12" height="12" viewBox="0 0 12 12"><path d="M6 0.5L11.5 3V9L6 11.5L0.5 9V3Z" fill="none" stroke="#a8a8a8"/><path d="M0.5 3L6 5.5L11.5 3M6 5.5V11.5" stroke="#a8a8a8" fill="none"/></svg>
<div class="a" style="left:399px;top:737px;width:1px;height:10px;background:#1c1c1c;"></div>
<span class="t " style="left:405px;top:737.72px;font-size:11px;color:#9a9a9a;">Mode</span>
<span class="t " style="left:480px;top:737.72px;font-size:11px;color:#9a9a9a;">T</span>
<span class="t " style="left:498px;top:737.72px;font-size:11px;color:#9a9a9a;">TrkMat</span>
<div class="a" style="left:565px;top:737px;width:1px;height:10px;background:#1c1c1c;"></div>
<span class="t " style="left:571px;top:737.72px;font-size:11px;color:#9a9a9a;">Parent</span>
<div class="a" style="left:682px;top:737px;width:1px;height:10px;background:#1c1c1c;"></div>
<div class="a" style="left:0px;top:752px;width:698px;height:16px;background:#3a3a3a;"></div>
<div class="a" style="left:0px;top:768px;width:698px;height:1px;background:#222;"></div>
<svg class="a" style="left:4px;top:753px;" width="13" height="13" viewBox="0 0 13 13"><rect width="13" height="13" fill="#1a1a1a"/><path d="M1 6.5Q6.5 1 12 6.5Q6.5 12 1 6.5Z" fill="#c8c8c8"/><circle cx="6.5" cy="6.2" r="2.3" fill="#333"/><circle cx="7.2" cy="5.6" r="0.8" fill="#ddd"/></svg>
<div class="a" style="left:34px;top:753px;width:13px;height:13px;background:#1a1a1a;"></div>
<div class="a" style="left:49px;top:753px;width:13px;height:13px;background:#1a1a1a;"></div>
<svg class="a" style="left:73px;top:756px;" width="7" height="9" viewBox="0 0 7 9"><path d="M0 0L7 4.5L0 9Z" fill="#c8c8c8"/></svg>
<div class="a" style="left:85px;top:754px;width:12px;height:12px;background:#b4a07c;"></div>
<span class="t " style="left:106px;top:754.98px;font-size:11.5px;color:#b8b8c0;font-weight:bold">1</span>
<svg class="a" style="left:134px;top:752px;" width="17" height="16" viewBox="0 0 17 16"><rect x="0.5" y="0.5" width="16" height="15" fill="#e8e8e8"/><path d="M1 1V15M16 1V15" stroke="#333" stroke-width="1.5" stroke-dasharray="1.5 1.5"/><rect x="3" y="2" width="11" height="12" fill="#111"/><circle cx="6.5" cy="5.5" r="2.2" fill="#2a9ee0"/><rect x="9" y="4" width="4" height="4" fill="#e05a20"/><path d="M3.5 13L7.5 7L11.5 13Z" fill="#30b040"/></svg>
<div class="a" style="left:151px;top:752px;width:111px;height:16px;background:#b0b0b0;"></div>
<div class="a" style="left:153px;top:754px;width:107px;height:12px;background:#3a3a3a;"></div>
<span class="t " style="left:156px;top:754.74px;font-size:12px;color:#d8d8d8;font-weight:bold">[信封]</span>
<svg class="a" style="left:267px;top:753px;" width="13" height="13" viewBox="0 0 13 13"><rect width="13" height="13" fill="#1a1a1a"/><path d="M1.5 7Q1.5 1.5 6.5 1.5Q11.5 1.5 11.5 7Z" fill="#d0d0d0"/><path d="M6.5 4V11" stroke="#1a1a1a" stroke-width="1.4"/><path d="M4.5 4.5H8.5" stroke="#1a1a1a" stroke-width="1"/><path d="M6.5 7V11.5M1 10H5M8 10H12" stroke="#d0d0d0" stroke-width="1.1"/></svg>
<div class="a" style="left:282px;top:753px;width:13px;height:13px;background:#1a1a1a;"></div>
<svg class="a" style="left:297px;top:753px;" width="13" height="13" viewBox="0 0 13 13"><rect width="13" height="13" fill="#1a1a1a"/><path d="M2 11.5L11 1.5" stroke="#c8c8c8" stroke-width="1.3"/></svg>
<div class="a" style="left:312px;top:753px;width:13px;height:13px;background:#1a1a1a;"></div>
<span class="t " style="left:313px;top:753.98px;font-size:11.5px;color:#c8c8c8;font-family:&quot;Liberation Serif&quot;;font-weight:bold"><i>fx</i></span>
<div class="a" style="left:342px;top:753px;width:13px;height:13px;background:#1a1a1a;"></div>
<div class="a" style="left:357px;top:753px;width:13px;height:13px;background:#1a1a1a;"></div>
<div class="a" style="left:372px;top:753px;width:13px;height:13px;background:#1a1a1a;"></div>
<div class="a" style="left:402px;top:752px;width:70px;height:16px;background:#1c1c1c;"></div>
<span class="t " style="left:409px;top:754.72px;font-size:11px;color:#d4d4d4;">Normal</span>
<svg class="a" style="left:458px;top:757px;" width="9" height="5" viewBox="0 0 9 5"><path d="M0 0H9L4.5 5Z" fill="#d8d8d8"/></svg>
<div class="a" style="left:472px;top:752px;width:116px;height:16px;background:#3a3a3a;"></div>
<div class="a" style="left:477px;top:753px;width:13px;height:13px;background:#1a1a1a;"></div>
<svg class="a" style="left:571px;top:755px;" width="11" height="11" viewBox="0 0 11 11"><path d="M5.5 5.5m0 0a1 1 0 0 1 2 0a2 2 0 0 1 -4 0a3 3 0 0 1 6 0a4 4 0 0 1 -8 0a4.8 4.8 0 0 1 9.6 -0.5" fill="none" stroke="#c8c8c8" stroke-width="1.1"/></svg>
<div class="a" style="left:588px;top:752px;width:91px;height:16px;background:#1c1c1c;"></div>
<span class="t " style="left:595px;top:754.72px;font-size:11px;color:#d4d4d4;">None</span>
<svg class="a" style="left:665px;top:757px;" width="9" height="5" viewBox="0 0 9 5"><path d="M0 0H9L4.5 5Z" fill="#d8d8d8"/></svg>
<div class="a" style="left:0px;top:769px;width:698px;height:16px;background:#2e2e2e;"></div>
<div class="a" style="left:0px;top:785px;width:698px;height:1px;background:#222;"></div>
<svg class="a" style="left:4px;top:770px;" width="13" height="13" viewBox="0 0 13 13"><rect width="13" height="13" fill="#1a1a1a"/><path d="M1 6.5Q6.5 1 12 6.5Q6.5 12 1 6.5Z" fill="#c8c8c8"/><circle cx="6.5" cy="6.2" r="2.3" fill="#333"/><circle cx="7.2" cy="5.6" r="0.8" fill="#ddd"/></svg>
<div class="a" style="left:34px;top:770px;width:13px;height:13px;background:#1a1a1a;"></div>
<div class="a" style="left:49px;top:770px;width:13px;height:13px;background:#1a1a1a;"></div>
<svg class="a" style="left:73px;top:773px;" width="7" height="9" viewBox="0 0 7 9"><path d="M0 0L7 4.5L0 9Z" fill="#c8c8c8"/></svg>
<div class="a" style="left:85px;top:771px;width:12px;height:12px;background:#b4a07c;"></div>
<span class="t " style="left:106px;top:771.98px;font-size:11.5px;color:#b8b8c0;font-weight:bold">2</span>
<svg class="a" style="left:134px;top:769px;" width="17" height="16" viewBox="0 0 17 16"><rect x="0.5" y="0.5" width="16" height="15" fill="#e8e8e8"/><path d="M1 1V15M16 1V15" stroke="#333" stroke-width="1.5" stroke-dasharray="1.5 1.5"/><rect x="3" y="2" width="11" height="12" fill="#111"/><circle cx="6.5" cy="5.5" r="2.2" fill="#2a9ee0"/><rect x="9" y="4" width="4" height="4" fill="#e05a20"/><path d="M3.5 13L7.5 7L11.5 13Z" fill="#30b040"/></svg>
<span class="t " style="left:155px;top:771.74px;font-size:12px;color:#d8d8d8;font-weight:bold">[滑块]</span>
<svg class="a" style="left:267px;top:770px;" width="13" height="13" viewBox="0 0 13 13"><rect width="13" height="13" fill="#1a1a1a"/><path d="M1.5 7Q1.5 1.5 6.5 1.5Q11.5 1.5 11.5 7Z" fill="#d0d0d0"/><path d="M6.5 4V11" stroke="#1a1a1a" stroke-width="1.4"/><path d="M4.5 4.5H8.5" stroke="#1a1a1a" stroke-width="1"/><path d="M6.5 7V11.5M1 10H5M8 10H12" stroke="#d0d0d0" stroke-width="1.1"/></svg>
<div class="a" style="left:282px;top:770px;width:13px;height:13px;background:#1a1a1a;"></div>
<svg class="a" style="left:297px;top:770px;" width="13" height="13" viewBox="0 0 13 13"><rect width="13" height="13" fill="#1a1a1a"/><path d="M2 11.5L11 1.5" stroke="#c8c8c8" stroke-width="1.3"/></svg>
<div class="a" style="left:342px;top:770px;width:13px;height:13px;background:#1a1a1a;"></div>
<div class="a" style="left:357px;top:770px;width:13px;height:13px;background:#1a1a1a;"></div>
<div class="a" style="left:372px;top:770px;width:13px;height:13px;background:#1a1a1a;"></div>
<div class="a" style="left:402px;top:769px;width:70px;height:16px;background:#1c1c1c;"></div>
<span class="t " style="left:409px;top:771.72px;font-size:11px;color:#d4d4d4;">Normal</span>
<svg class="a" style="left:458px;top:774px;" width="9" height="5" viewBox="0 0 9 5"><path d="M0 0H9L4.5 5Z" fill="#d8d8d8"/></svg>
<div class="a" style="left:477px;top:770px;width:13px;height:13px;background:#1a1a1a;"></div>
<div class="a" style="left:495px;top:769px;width:67px;height:16px;background:#1c1c1c;"></div>
<span class="t " style="left:502px;top:771.72px;font-size:11px;color:#d4d4d4;">None</span>
<svg class="a" style="left:548px;top:774px;" width="9" height="5" viewBox="0 0 9 5"><path d="M0 0H9L4.5 5Z" fill="#d8d8d8"/></svg>
<svg class="a" style="left:571px;top:772px;" width="11" height="11" viewBox="0 0 11 11"><path d="M5.5 5.5m0 0a1 1 0 0 1 2 0a2 2 0 0 1 -4 0a3 3 0 0 1 6 0a4 4 0 0 1 -8 0a4.8 4.8 0 0 1 9.6 -0.5" fill="none" stroke="#c8c8c8" stroke-width="1.1"/></svg>
<div class="a" style="left:588px;top:769px;width:91px;height:16px;background:#1c1c1c;"></div>
<span class="t " style="left:595px;top:771.72px;font-size:11px;color:#d4d4d4;">None</span>
<svg class="a" style="left:665px;top:774px;" width="9" height="5" viewBox="0 0 9 5"><path d="M0 0H9L4.5 5Z" fill="#d8d8d8"/></svg>
<div class="a" style="left:0px;top:786px;width:698px;height:16px;background:#2e2e2e;"></div>
<div class="a" style="left:0px;top:802px;width:698px;height:1px;background:#222;"></div>
<div class="a" style="left:4px;top:787px;width:13px;height:13px;background:#1a1a1a;"></div>
<div class="a" style="left:49px;top:787px;width:13px;height:13px;background:#1a1a1a;"></div>
<svg class="a" style="left:73px;top:790px;" width="7" height="9" viewBox="0 0 7 9"><path d="M0 0L7 4.5L0 9Z" fill="#c8c8c8"/></svg>
<div class="a" style="left:85px;top:788px;width:12px;height:12px;background:#9b30a8;"></div>
<span class="t " style="left:106px;top:788.98px;font-size:11.5px;color:#b8b8c0;font-weight:bold">3</span>
<svg class="a" style="left:135px;top:786px;" width="14" height="16" viewBox="0 0 14 16"><path d="M0 1H9L13 4V5H0Z" fill="#f08a18"/><rect x="2" y="5" width="11" height="11" fill="#2a1a08"/><text x="3" y="14" font-size="7.5" font-weight="bold" fill="#f08a18" font-family="Liberation Sans">Ai</text><rect x="3.5" y="2" width="3" height="1.5" fill="#2a1a08"/></svg>
<svg class="a" style="left:152px;top:787px;" width="13" height="14" viewBox="0 0 13 14"><rect x="0.5" y="0.5" width="12" height="13" fill="#d8d8d8" stroke="#555"/><rect x="2" y="2" width="9" height="10" fill="#333"/><circle cx="6.5" cy="7" r="2.8" fill="#d0d0d0"/></svg>
<span class="t " style="left:171px;top:788.74px;font-size:12px;color:#d8d8d8;font-weight:bold">顶部橙色 2</span>
<svg class="a" style="left:267px;top:787px;" width="13" height="13" viewBox="0 0 13 13"><rect width="13" height="13" fill="#1a1a1a"/><path d="M1.5 7Q1.5 1.5 6.5 1.5Q11.5 1.5 11.5 7Z" fill="#d0d0d0"/><path d="M6.5 4V11" stroke="#1a1a1a" stroke-width="1.4"/><path d="M4.5 4.5H8.5" stroke="#1a1a1a" stroke-width="1"/><path d="M6.5 7V11.5M1 10H5M8 10H12" stroke="#d0d0d0" stroke-width="1.1"/></svg>
<svg class="a" style="left:282px;top:787px;" width="13" height="13" viewBox="0 0 13 13"><rect width="13" height="13" fill="#1a1a1a"/><circle cx="6.5" cy="6.5" r="2.3" fill="none" stroke="#d0d0d0" stroke-width="1.1"/><path d="M6.5 1.5V3.5M6.5 9.5V11.5M1.5 6.5H3.5M9.5 6.5H11.5M3 3L4.3 4.3M8.7 8.7L10 10M3 10L4.3 8.7M8.7 4.3L10 3" stroke="#d0d0d0" stroke-width="1"/></svg>
<svg class="a" style="left:297px;top:787px;" width="13" height="13" viewBox="0 0 13 13"><rect width="13" height="13" fill="#1a1a1a"/><path d="M2 11.5L11 1.5" stroke="#c8c8c8" stroke-width="1.3"/></svg>
<div class="a" style="left:342px;top:787px;width:13px;height:13px;background:#1a1a1a;"></div>
<div class="a" style="left:372px;top:787px;width:13px;height:13px;background:#1a1a1a;"></div>
<div class="a" style="left:402px;top:786px;width:70px;height:16px;background:#1c1c1c;"></div>
<span class="t " style="left:409px;top:788.72px;font-size:11px;color:#d4d4d4;">Normal</span>
<svg class="a" style="left:458px;top:791px;" width="9" height="5" viewBox="0 0 9 5"><path d="M0 0H9L4.5 5Z" fill="#d8d8d8"/></svg>
<div class="a" style="left:495px;top:786px;width:67px;height:16px;background:#1c1c1c;"></div>
<span class="t " style="left:502px;top:788.72px;font-size:11px;color:#d4d4d4;">None</span>
<svg class="a" style="left:548px;top:791px;" width="9" height="5" viewBox="0 0 9 5"><path d="M0 0H9L4.5 5Z" fill="#d8d8d8"/></svg>
<svg class="a" style="left:571px;top:789px;" width="11" height="11" viewBox="0 0 11 11"><path d="M5.5 5.5m0 0a1 1 0 0 1 2 0a2 2 0 0 1 -4 0a3 3 0 0 1 6 0a4 4 0 0 1 -8 0a4.8 4.8 0 0 1 9.6 -0.5" fill="none" stroke="#c8c8c8" stroke-width="1.1"/></svg>
<div class="a" style="left:588px;top:786px;width:91px;height:16px;background:#1c1c1c;"></div>
<span class="t " style="left:595px;top:788.72px;font-size:11px;color:#d4d4d4;">None</span>
<svg class="a" style="left:665px;top:791px;" width="9" height="5" viewBox="0 0 9 5"><path d="M0 0H9L4.5 5Z" fill="#d8d8d8"/></svg>
<div class="a" style="left:0px;top:803px;width:698px;height:16px;background:#2e2e2e;"></div>
<div class="a" style="left:0px;top:819px;width:698px;height:1px;background:#222;"></div>
<svg class="a" style="left:4px;top:804px;" width="13" height="13" viewBox="0 0 13 13"><rect width="13" height="13" fill="#1a1a1a"/><path d="M1 6.5Q6.5 1 12 6.5Q6.5 12 1 6.5Z" fill="#a0a0a0"/><circle cx="6.5" cy="6.2" r="2.3" fill="#333"/><circle cx="7.2" cy="5.6" r="0.8" fill="#ddd"/></svg>
<div class="a" style="left:34px;top:804px;width:13px;height:13px;background:#1a1a1a;"></div>
<div class="a" style="left:49px;top:804px;width:13px;height:13px;background:#1a1a1a;"></div>
<svg class="a" style="left:72px;top:808px;" width="9" height="8" viewBox="0 0 9 8"><path d="M0 0H9L4.5 8Z" fill="#c8c8c8"/></svg>
<div class="a" style="left:85px;top:805px;width:12px;height:12px;background:#b83535;"></div>
<span class="t " style="left:106px;top:805.98px;font-size:11.5px;color:#b8b8c0;font-weight:bold">4</span>
<span class="t " style="left:137px;top:805.24px;font-size:12px;color:#c8c8c8;font-family:&quot;Liberation Serif&quot;;font-weight:bold">T</span>
<svg class="a" style="left:152px;top:804px;" width="13" height="14" viewBox="0 0 13 14"><rect x="0.5" y="0.5" width="12" height="13" fill="#d8d8d8" stroke="#555"/><rect x="2" y="2" width="9" height="10" fill="#333"/><circle cx="6.5" cy="7" r="2.8" fill="#d0d0d0"/></svg>
<span class="t " style="left:171px;top:805.74px;font-size:12px;color:#d8d8d8;font-weight:bold">17:03</span>
<svg class="a" style="left:267px;top:804px;" width="13" height="13" viewBox="0 0 13 13"><rect width="13" height="13" fill="#1a1a1a"/><path d="M1.5 7Q1.5 1.5 6.5 1.5Q11.5 1.5 11.5 7Z" fill="#d0d0d0"/><path d="M6.5 4V11" stroke="#1a1a1a" stroke-width="1.4"/><path d="M4.5 4.5H8.5" stroke="#1a1a1a" stroke-width="1"/><path d="M6.5 7V11.5M1 10H5M8 10H12" stroke="#d0d0d0" stroke-width="1.1"/></svg>
<svg class="a" style="left:282px;top:804px;" width="13" height="13" viewBox="0 0 13 13"><rect width="13" height="13" fill="#1a1a1a"/><circle cx="6.5" cy="6.5" r="2.3" fill="none" stroke="#8a8a8a" stroke-width="1.1"/><path d="M6.5 1.5V3.5M6.5 9.5V11.5M1.5 6.5H3.5M9.5 6.5H11.5M3 3L4.3 4.3M8.7 8.7L10 10M3 10L4.3 8.7M8.7 4.3L10 3" stroke="#8a8a8a" stroke-width="1"/></svg>
<svg class="a" style="left:297px;top:804px;" width="13" height="13" viewBox="0 0 13 13"><rect width="13" height="13" fill="#1a1a1a"/><path d="M2 11.5L11 1.5" stroke="#c8c8c8" stroke-width="1.3"/></svg>
<div class="a" style="left:342px;top:804px;width:13px;height:13px;background:#1a1a1a;"></div>
<div class="a" style="left:372px;top:804px;width:13px;height:13px;background:#1a1a1a;"></div>
<div class="a" style="left:402px;top:803px;width:70px;height:16px;background:#1c1c1c;"></div>
<span class="t " style="left:409px;top:805.72px;font-size:11px;color:#d4d4d4;">Normal</span>
<svg class="a" style="left:458px;top:808px;" width="9" height="5" viewBox="0 0 9 5"><path d="M0 0H9L4.5 5Z" fill="#d8d8d8"/></svg>
<div class="a" style="left:495px;top:803px;width:67px;height:16px;background:#1c1c1c;"></div>
<span class="t " style="left:502px;top:805.72px;font-size:11px;color:#d4d4d4;">Alpha</span>
<svg class="a" style="left:548px;top:808px;" width="9" height="5" viewBox="0 0 9 5"><path d="M0 0H9L4.5 5Z" fill="#d8d8d8"/></svg>
<svg class="a" style="left:571px;top:806px;" width="11" height="11" viewBox="0 0 11 11"><path d="M5.5 5.5m0 0a1 1 0 0 1 2 0a2 2 0 0 1 -4 0a3 3 0 0 1 6 0a4 4 0 0 1 -8 0a4.8 4.8 0 0 1 9.6 -0.5" fill="none" stroke="#c8c8c8" stroke-width="1.1"/></svg>
<div class="a" style="left:588px;top:803px;width:91px;height:16px;background:#1c1c1c;"></div>
<span class="t " style="left:595px;top:805.72px;font-size:11px;color:#d4d4d4;">None</span>
<svg class="a" style="left:665px;top:808px;" width="9" height="5" viewBox="0 0 9 5"><path d="M0 0H9L4.5 5Z" fill="#d8d8d8"/></svg>
<div class="a" style="left:0px;top:820px;width:698px;height:16px;background:#262626;"></div>
<div class="a" style="left:0px;top:836px;width:698px;height:1px;background:#1e1e1e;"></div>
<svg class="a" style="left:89px;top:825px;" width="8" height="8" viewBox="0 0 8 8"><path d="M0 0H8L4.0 8Z" fill="#c8c8c8"/></svg>
<span class="t " style="left:106px;top:823.22px;font-size:11px;color:#b0b0b0;">Text</span>
<div class="a" style="left:0px;top:837px;width:698px;height:16px;background:#262626;"></div>
<div class="a" style="left:0px;top:853px;width:698px;height:1px;background:#1e1e1e;"></div>
<span class="t " style="left:139px;top:840.22px;font-size:11px;color:#b0b0b0;">Source Text</span>
<div class="a" style="left:0px;top:854px;width:698px;height:16px;background:#262626;"></div>
<div class="a" style="left:0px;top:870px;width:698px;height:1px;background:#1e1e1e;"></div>
<svg class="a" style="left:107px;top:858px;" width="7" height="9" viewBox="0 0 7 9"><path d="M0 0L7 4.5L0 9Z" fill="#c8c8c8"/></svg>
<span class="t " style="left:123px;top:857.22px;font-size:11px;color:#b0b0b0;">Path Options</span>
<div class="a" style="left:0px;top:871px;width:698px;height:16px;background:#262626;"></div>
<div class="a" style="left:0px;top:887px;width:698px;height:1px;background:#1e1e1e;"></div>
<svg class="a" style="left:107px;top:875px;" width="7" height="9" viewBox="0 0 7 9"><path d="M0 0L7 4.5L0 9Z" fill="#c8c8c8"/></svg>
<span class="t " style="left:123px;top:874.22px;font-size:11px;color:#b0b0b0;">More Options</span>
<div class="a" style="left:0px;top:888px;width:698px;height:16px;background:#262626;"></div>
<div class="a" style="left:0px;top:904px;width:698px;height:1px;background:#1e1e1e;"></div>
<svg class="a" style="left:90px;top:892px;" width="7" height="9" viewBox="0 0 7 9"><path d="M0 0L7 4.5L0 9Z" fill="#c8c8c8"/></svg>
<span class="t " style="left:106px;top:891.22px;font-size:11px;color:#b0b0b0;">Transform</span>
<span class="t " style="left:336px;top:823.22px;font-size:11px;color:#b0b0b0;">Animate:</span>
<svg class="a" style="left:383px;top:822px;" width="12" height="12" viewBox="0 0 12 12"><circle cx="6" cy="6" r="5.5" fill="#c8c8c8"/><path d="M4.5 3L8.5 6L4.5 9Z" fill="#333"/></svg>
<svg class="a" style="left:8px;top:841px;" width="5" height="9" viewBox="0 0 5 9"><path d="M5 0L0 4.5L5 9Z" fill="#c8c8c8"/></svg>
<svg class="a" style="left:21px;top:841px;" width="10" height="10" viewBox="0 0 10 10"><path d="M5 0L10 5L5 10L0 5Z" fill="#2aa8e0"/></svg>
<svg class="a" style="left:38px;top:841px;" width="5" height="9" viewBox="0 0 5 9"><path d="M0 0L5 4.5L0 9Z" fill="#6a6a6a"/></svg>
<svg class="a" style="left:121px;top:838px;" width="11" height="13" viewBox="0 0 11 13"><rect x="3.5" y="0" width="4" height="1.3" fill="#2aa8e0"/><circle cx="5.5" cy="7.5" r="4.3" fill="none" stroke="#2aa8e0" stroke-width="1.5"/><path d="M5.5 7.5L7.5 5.5" stroke="#2aa8e0" stroke-width="1.2"/></svg>
<svg class="a" style="left:4px;top:856px;" width="13" height="13" viewBox="0 0 13 13"><rect width="13" height="13" fill="#1a1a1a"/><path d="M1 6.5Q6.5 1 12 6.5Q6.5 12 1 6.5Z" fill="#a8a8a8"/><circle cx="6.5" cy="6.2" r="2.3" fill="#333"/><circle cx="7.2" cy="5.6" r="0.8" fill="#ddd"/></svg>
<span class="t " style="left:267px;top:891.22px;font-size:11px;color:#3a9fe0;">Reset</span>
<div class="a" style="left:0px;top:905px;width:698px;height:16px;background:#2e2e2e;"></div>
<div class="a" style="left:0px;top:921px;width:698px;height:1px;background:#222;"></div>
<div class="a" style="left:4px;top:906px;width:13px;height:13px;background:#1a1a1a;"></div>
<div class="a" style="left:49px;top:906px;width:13px;height:13px;background:#1a1a1a;"></div>
<svg class="a" style="left:73px;top:909px;" width="7" height="9" viewBox="0 0 7 9"><path d="M0 0L7 4.5L0 9Z" fill="#c8c8c8"/></svg>
<div class="a" style="left:85px;top:907px;width:12px;height:12px;background:#a9a9cc;"></div>
<span class="t " style="left:106px;top:907.98px;font-size:11.5px;color:#b8b8c0;font-weight:bold">5</span>
<svg class="a" style="left:135px;top:905px;" width="14" height="16" viewBox="0 0 14 16"><path d="M0 1H9L13 4V5H0Z" fill="#f08a18"/><rect x="2" y="5" width="11" height="11" fill="#2a1a08"/><text x="3" y="14" font-size="7.5" font-weight="bold" fill="#f08a18" font-family="Liberation Sans">Ai</text><rect x="3.5" y="2" width="3" height="1.5" fill="#2a1a08"/></svg>
<svg class="a" style="left:152px;top:906px;" width="13" height="14" viewBox="0 0 13 14"><rect x="0.5" y="0.5" width="12" height="13" fill="#d8d8d8" stroke="#555"/><rect x="2" y="2" width="9" height="10" fill="#333"/><circle cx="6.5" cy="7" r="2.8" fill="#d0d0d0"/></svg>
<span class="t " style="left:171px;top:907.74px;font-size:12px;color:#d8d8d8;font-weight:bold">时间</span>
<svg class="a" style="left:267px;top:906px;" width="13" height="13" viewBox="0 0 13 13"><rect width="13" height="13" fill="#1a1a1a"/><path d="M1.5 7Q1.5 1.5 6.5 1.5Q11.5 1.5 11.5 7Z" fill="#d0d0d0"/><path d="M6.5 4V11" stroke="#1a1a1a" stroke-width="1.4"/><path d="M4.5 4.5H8.5" stroke="#1a1a1a" stroke-width="1"/><path d="M6.5 7V11.5M1 10H5M8 10H12" stroke="#d0d0d0" stroke-width="1.1"/></svg>
<svg class="a" style="left:282px;top:906px;" width="13" height="13" viewBox="0 0 13 13"><rect width="13" height="13" fill="#1a1a1a"/><circle cx="6.5" cy="6.5" r="2.3" fill="none" stroke="#d0d0d0" stroke-width="1.1"/><path d="M6.5 1.5V3.5M6.5 9.5V11.5M1.5 6.5H3.5M9.5 6.5H11.5M3 3L4.3 4.3M8.7 8.7L10 10M3 10L4.3 8.7M8.7 4.3L10 3" stroke="#d0d0d0" stroke-width="1"/></svg>
<svg class="a" style="left:297px;top:906px;" width="13" height="13" viewBox="0 0 13 13"><rect width="13" height="13" fill="#1a1a1a"/><path d="M2 11.5L11 1.5" stroke="#c8c8c8" stroke-width="1.3"/></svg>
<div class="a" style="left:342px;top:906px;width:13px;height:13px;background:#1a1a1a;"></div>
<div class="a" style="left:357px;top:906px;width:13px;height:13px;background:#1a1a1a;"></div>
<div class="a" style="left:372px;top:906px;width:13px;height:13px;background:#1a1a1a;"></div>
<div class="a" style="left:402px;top:905px;width:70px;height:16px;background:#1c1c1c;"></div>
<span class="t " style="left:409px;top:907.72px;font-size:11px;color:#d4d4d4;">Normal</span>
<svg class="a" style="left:458px;top:910px;" width="9" height="5" viewBox="0 0 9 5"><path d="M0 0H9L4.5 5Z" fill="#d8d8d8"/></svg>
<div class="a" style="left:477px;top:906px;width:13px;height:13px;background:#1a1a1a;"></div>
<div class="a" style="left:495px;top:905px;width:67px;height:16px;background:#1c1c1c;"></div>
<span class="t " style="left:502px;top:907.72px;font-size:11px;color:#d4d4d4;">Alpha</span>
<svg class="a" style="left:548px;top:910px;" width="9" height="5" viewBox="0 0 9 5"><path d="M0 0H9L4.5 5Z" fill="#d8d8d8"/></svg>
<svg class="a" style="left:571px;top:908px;" width="11" height="11" viewBox="0 0 11 11"><path d="M5.5 5.5m0 0a1 1 0 0 1 2 0a2 2 0 0 1 -4 0a3 3 0 0 1 6 0a4 4 0 0 1 -8 0a4.8 4.8 0 0 1 9.6 -0.5" fill="none" stroke="#c8c8c8" stroke-width="1.1"/></svg>
<div class="a" style="left:588px;top:905px;width:91px;height:16px;background:#1c1c1c;"></div>
<span class="t " style="left:595px;top:907.72px;font-size:11px;color:#d4d4d4;">None</span>
<svg class="a" style="left:665px;top:910px;" width="9" height="5" viewBox="0 0 9 5"><path d="M0 0H9L4.5 5Z" fill="#d8d8d8"/></svg>
<div class="a" style="left:0px;top:922px;width:698px;height:16px;background:#2e2e2e;"></div>
<div class="a" style="left:0px;top:938px;width:698px;height:1px;background:#222;"></div>
<svg class="a" style="left:4px;top:923px;" width="13" height="13" viewBox="0 0 13 13"><rect width="13" height="13" fill="#1a1a1a"/><path d="M1 6.5Q6.5 1 12 6.5Q6.5 12 1 6.5Z" fill="#c8c8c8"/><circle cx="6.5" cy="6.2" r="2.3" fill="#333"/><circle cx="7.2" cy="5.6" r="0.8" fill="#ddd"/></svg>
<div class="a" style="left:34px;top:923px;width:13px;height:13px;background:#1a1a1a;"></div>
<div class="a" style="left:49px;top:923px;width:13px;height:13px;background:#1a1a1a;"></div>
<svg class="a" style="left:73px;top:926px;" width="7" height="9" viewBox="0 0 7 9"><path d="M0 0L7 4.5L0 9Z" fill="#c8c8c8"/></svg>
<div class="a" style="left:85px;top:924px;width:12px;height:12px;background:#a9a9cc;"></div>
<span class="t " style="left:106px;top:924.98px;font-size:11.5px;color:#b8b8c0;font-weight:bold">6</span>
<svg class="a" style="left:135px;top:922px;" width="14" height="16" viewBox="0 0 14 16"><path d="M0 1H9L13 4V5H0Z" fill="#f08a18"/><rect x="2" y="5" width="11" height="11" fill="#2a1a08"/><text x="3" y="14" font-size="7.5" font-weight="bold" fill="#f08a18" font-family="Liberation Sans">Ai</text><rect x="3.5" y="2" width="3" height="1.5" fill="#2a1a08"/></svg>
<span class="t " style="left:155px;top:924.74px;font-size:12px;color:#d8d8d8;font-weight:bold">顶部橙色</span>
<svg class="a" style="left:267px;top:923px;" width="13" height="13" viewBox="0 0 13 13"><rect width="13" height="13" fill="#1a1a1a"/><path d="M1.5 7Q1.5 1.5 6.5 1.5Q11.5 1.5 11.5 7Z" fill="#d0d0d0"/><path d="M6.5 4V11" stroke="#1a1a1a" stroke-width="1.4"/><path d="M4.5 4.5H8.5" stroke="#1a1a1a" stroke-width="1"/><path d="M6.5 7V11.5M1 10H5M8 10H12" stroke="#d0d0d0" stroke-width="1.1"/></svg>
<svg class="a" style="left:282px;top:923px;" width="13" height="13" viewBox="0 0 13 13"><rect width="13" height="13" fill="#1a1a1a"/><circle cx="6.5" cy="6.5" r="2.3" fill="none" stroke="#d0d0d0" stroke-width="1.1"/><path d="M6.5 1.5V3.5M6.5 9.5V11.5M1.5 6.5H3.5M9.5 6.5H11.5M3 3L4.3 4.3M8.7 8.7L10 10M3 10L4.3 8.7M8.7 4.3L10 3" stroke="#d0d0d0" stroke-width="1"/></svg>
<svg class="a" style="left:297px;top:923px;" width="13" height="13" viewBox="0 0 13 13"><rect width="13" height="13" fill="#1a1a1a"/><path d="M2 11.5L11 1.5" stroke="#c8c8c8" stroke-width="1.3"/></svg>
<div class="a" style="left:342px;top:923px;width:13px;height:13px;background:#1a1a1a;"></div>
<div class="a" style="left:357px;top:923px;width:13px;height:13px;background:#1a1a1a;"></div>
<div class="a" style="left:372px;top:923px;width:13px;height:13px;background:#1a1a1a;"></div>
<div class="a" style="left:402px;top:922px;width:70px;height:16px;background:#1c1c1c;"></div>
<span class="t " style="left:409px;top:924.72px;font-size:11px;color:#d4d4d4;">Normal</span>
<svg class="a" style="left:458px;top:927px;" width="9" height="5" viewBox="0 0 9 5"><path d="M0 0H9L4.5 5Z" fill="#d8d8d8"/></svg>
<div class="a" style="left:477px;top:923px;width:13px;height:13px;background:#1a1a1a;"></div>
<div class="a" style="left:495px;top:922px;width:67px;height:16px;background:#1c1c1c;"></div>
<span class="t " style="left:502px;top:924.72px;font-size:11px;color:#d4d4d4;">None</span>
<svg class="a" style="left:548px;top:927px;" width="9" height="5" viewBox="0 0 9 5"><path d="M0 0H9L4.5 5Z" fill="#d8d8d8"/></svg>
<svg class="a" style="left:571px;top:925px;" width="11" height="11" viewBox="0 0 11 11"><path d="M5.5 5.5m0 0a1 1 0 0 1 2 0a2 2 0 0 1 -4 0a3 3 0 0 1 6 0a4 4 0 0 1 -8 0a4.8 4.8 0 0 1 9.6 -0.5" fill="none" stroke="#c8c8c8" stroke-width="1.1"/></svg>
<div class="a" style="left:588px;top:922px;width:91px;height:16px;background:#1c1c1c;"></div>
<span class="t " style="left:595px;top:924.72px;font-size:11px;color:#d4d4d4;">None</span>
<svg class="a" style="left:665px;top:927px;" width="9" height="5" viewBox="0 0 9 5"><path d="M0 0H9L4.5 5Z" fill="#d8d8d8"/></svg>
<div class="a" style="left:0px;top:939px;width:698px;height:16px;background:#2e2e2e;"></div>
<div class="a" style="left:0px;top:955px;width:698px;height:1px;background:#222;"></div>
<svg class="a" style="left:4px;top:940px;" width="13" height="13" viewBox="0 0 13 13"><rect width="13" height="13" fill="#1a1a1a"/><path d="M1 6.5Q6.5 1 12 6.5Q6.5 12 1 6.5Z" fill="#c8c8c8"/><circle cx="6.5" cy="6.2" r="2.3" fill="#333"/><circle cx="7.2" cy="5.6" r="0.8" fill="#ddd"/></svg>
<div class="a" style="left:34px;top:940px;width:13px;height:13px;background:#1a1a1a;"></div>
<div class="a" style="left:49px;top:940px;width:13px;height:13px;background:#1a1a1a;"></div>
<svg class="a" style="left:73px;top:943px;" width="7" height="9" viewBox="0 0 7 9"><path d="M0 0L7 4.5L0 9Z" fill="#c8c8c8"/></svg>
<div class="a" style="left:85px;top:941px;width:12px;height:12px;background:#a9a9cc;"></div>
<span class="t " style="left:106px;top:941.98px;font-size:11.5px;color:#b8b8c0;font-weight:bold">7</span>
<svg class="a" style="left:135px;top:939px;" width="14" height="16" viewBox="0 0 14 16"><path d="M0 1H9L13 4V5H0Z" fill="#f08a18"/><rect x="2" y="5" width="11" height="11" fill="#2a1a08"/><text x="3" y="14" font-size="7.5" font-weight="bold" fill="#f08a18" font-family="Liberation Sans">Ai</text><rect x="3.5" y="2" width="3" height="1.5" fill="#2a1a08"/></svg>
<span class="t " style="left:155px;top:941.74px;font-size:12px;color:#d8d8d8;font-weight:bold">中部黄色</span>
<svg class="a" style="left:267px;top:940px;" width="13" height="13" viewBox="0 0 13 13"><rect width="13" height="13" fill="#1a1a1a"/><path d="M1.5 7Q1.5 1.5 6.5 1.5Q11.5 1.5 11.5 7Z" fill="#d0d0d0"/><path d="M6.5 4V11" stroke="#1a1a1a" stroke-width="1.4"/><path d="M4.5 4.5H8.5" stroke="#1a1a1a" stroke-width="1"/><path d="M6.5 7V11.5M1 10H5M8 10H12" stroke="#d0d0d0" stroke-width="1.1"/></svg>
<svg class="a" style="left:282px;top:940px;" width="13" height="13" viewBox="0 0 13 13"><rect width="13" height="13" fill="#1a1a1a"/><circle cx="6.5" cy="6.5" r="2.3" fill="none" stroke="#d0d0d0" stroke-width="1.1"/><path d="M6.5 1.5V3.5M6.5 9.5V11.5M1.5 6.5H3.5M9.5 6.5H11.5M3 3L4.3 4.3M8.7 8.7L10 10M3 10L4.3 8.7M8.7 4.3L10 3" stroke="#d0d0d0" stroke-width="1"/></svg>
<svg class="a" style="left:297px;top:940px;" width="13" height="13" viewBox="0 0 13 13"><rect width="13" height="13" fill="#1a1a1a"/><path d="M2 11.5L11 1.5" stroke="#c8c8c8" stroke-width="1.3"/></svg>
<div class="a" style="left:342px;top:940px;width:13px;height:13px;background:#1a1a1a;"></div>
<div class="a" style="left:357px;top:940px;width:13px;height:13px;background:#1a1a1a;"></div>
<div class="a" style="left:372px;top:940px;width:13px;height:13px;background:#1a1a1a;"></div>
<div class="a" style="left:402px;top:939px;width:70px;height:16px;background:#1c1c1c;"></div>
<span class="t " style="left:409px;top:941.72px;font-size:11px;color:#d4d4d4;">Normal</span>
<svg class="a" style="left:458px;top:944px;" width="9" height="5" viewBox="0 0 9 5"><path d="M0 0H9L4.5 5Z" fill="#d8d8d8"/></svg>
<div class="a" style="left:477px;top:940px;width:13px;height:13px;background:#1a1a1a;"></div>
<div class="a" style="left:495px;top:939px;width:67px;height:16px;background:#1c1c1c;"></div>
<span class="t " style="left:502px;top:941.72px;font-size:11px;color:#d4d4d4;">None</span>
<svg class="a" style="left:548px;top:944px;" width="9" height="5" viewBox="0 0 9 5"><path d="M0 0H9L4.5 5Z" fill="#d8d8d8"/></svg>
<svg class="a" style="left:571px;top:942px;" width="11" height="11" viewBox="0 0 11 11"><path d="M5.5 5.5m0 0a1 1 0 0 1 2 0a2 2 0 0 1 -4 0a3 3 0 0 1 6 0a4 4 0 0 1 -8 0a4.8 4.8 0 0 1 9.6 -0.5" fill="none" stroke="#c8c8c8" stroke-width="1.1"/></svg>
<div class="a" style="left:588px;top:939px;width:91px;height:16px;background:#1c1c1c;"></div>
<span class="t " style="left:595px;top:941.72px;font-size:11px;color:#d4d4d4;">6. 顶部橙色</span>
<svg class="a" style="left:665px;top:944px;" width="9" height="5" viewBox="0 0 9 5"><path d="M0 0H9L4.5 5Z" fill="#d8d8d8"/></svg>
<div class="a" style="left:0px;top:956px;width:698px;height:16px;background:#2e2e2e;"></div>
<div class="a" style="left:0px;top:972px;width:698px;height:1px;background:#222;"></div>
<svg class="a" style="left:4px;top:957px;" width="13" height="13" viewBox="0 0 13 13"><rect width="13" height="13" fill="#1a1a1a"/><path d="M1 6.5Q6.5 1 12 6.5Q6.5 12 1 6.5Z" fill="#c8c8c8"/><circle cx="6.5" cy="6.2" r="2.3" fill="#333"/><circle cx="7.2" cy="5.6" r="0.8" fill="#ddd"/></svg>
<div class="a" style="left:34px;top:957px;width:13px;height:13px;background:#1a1a1a;"></div>
<div class="a" style="left:49px;top:957px;width:13px;height:13px;background:#1a1a1a;"></div>
<svg class="a" style="left:50px;top:958px;" width="11" height="11" viewBox="0 0 11 11"><path d="M3 5V3.5Q3 1.5 5.5 1.5Q8 1.5 8 3.5V5" fill="none" stroke="#c8c8c8" stroke-width="1.3"/><rect x="2" y="5" width="7" height="6" fill="#c8c8c8"/></svg>
<svg class="a" style="left:73px;top:960px;" width="7" height="9" viewBox="0 0 7 9"><path d="M0 0L7 4.5L0 9Z" fill="#c8c8c8"/></svg>
<div class="a" style="left:85px;top:958px;width:12px;height:12px;background:#a9a9cc;"></div>
<span class="t " style="left:106px;top:958.98px;font-size:11.5px;color:#b8b8c0;font-weight:bold">8</span>
<svg class="a" style="left:135px;top:956px;" width="14" height="16" viewBox="0 0 14 16"><path d="M0 1H9L13 4V5H0Z" fill="#f08a18"/><rect x="2" y="5" width="11" height="11" fill="#2a1a08"/><text x="3" y="14" font-size="7.5" font-weight="bold" fill="#f08a18" font-family="Liberation Sans">Ai</text><rect x="3.5" y="2" width="3" height="1.5" fill="#2a1a08"/></svg>
<span class="t " style="left:155px;top:958.74px;font-size:12px;color:#d8d8d8;font-weight:bold">BG</span>
<svg class="a" style="left:267px;top:957px;" width="13" height="13" viewBox="0 0 13 13"><rect width="13" height="13" fill="#1a1a1a"/><path d="M1.5 7Q1.5 1.5 6.5 1.5Q11.5 1.5 11.5 7Z" fill="#d0d0d0"/><path d="M6.5 4V11" stroke="#1a1a1a" stroke-width="1.4"/><path d="M4.5 4.5H8.5" stroke="#1a1a1a" stroke-width="1"/><path d="M6.5 7V11.5M1 10H5M8 10H12" stroke="#d0d0d0" stroke-width="1.1"/></svg>
<svg class="a" style="left:282px;top:957px;" width="13" height="13" viewBox="0 0 13 13"><rect width="13" height="13" fill="#1a1a1a"/><circle cx="6.5" cy="6.5" r="2.3" fill="none" stroke="#d0d0d0" stroke-width="1.1"/><path d="M6.5 1.5V3.5M6.5 9.5V11.5M1.5 6.5H3.5M9.5 6.5H11.5M3 3L4.3 4.3M8.7 8.7L10 10M3 10L4.3 8.7M8.7 4.3L10 3" stroke="#d0d0d0" stroke-width="1"/></svg>
<svg class="a" style="left:297px;top:957px;" width="13" height="13" viewBox="0 0 13 13"><rect width="13" height="13" fill="#1a1a1a"/><path d="M2 11.5L11 1.5" stroke="#c8c8c8" stroke-width="1.3"/></svg>
<div class="a" style="left:342px;top:957px;width:13px;height:13px;background:#1a1a1a;"></div>
<div class="a" style="left:357px;top:957px;width:13px;height:13px;background:#1a1a1a;"></div>
<div class="a" style="left:372px;top:957px;width:13px;height:13px;background:#1a1a1a;"></div>
<div class="a" style="left:402px;top:956px;width:70px;height:16px;background:#1c1c1c;"></div>
<span class="t " style="left:409px;top:958.72px;font-size:11px;color:#d4d4d4;">Normal</span>
<svg class="a" style="left:458px;top:961px;" width="9" height="5" viewBox="0 0 9 5"><path d="M0 0H9L4.5 5Z" fill="#d8d8d8"/></svg>
<div class="a" style="left:477px;top:957px;width:13px;height:13px;background:#1a1a1a;"></div>
<div class="a" style="left:495px;top:956px;width:67px;height:16px;background:#1c1c1c;"></div>
<span class="t " style="left:502px;top:958.72px;font-size:11px;color:#d4d4d4;">None</span>
<svg class="a" style="left:548px;top:961px;" width="9" height="5" viewBox="0 0 9 5"><path d="M0 0H9L4.5 5Z" fill="#d8d8d8"/></svg>
<svg class="a" style="left:571px;top:959px;" width="11" height="11" viewBox="0 0 11 11"><path d="M5.5 5.5m0 0a1 1 0 0 1 2 0a2 2 0 0 1 -4 0a3 3 0 0 1 6 0a4 4 0 0 1 -8 0a4.8 4.8 0 0 1 9.6 -0.5" fill="none" stroke="#c8c8c8" stroke-width="1.1"/></svg>
<div class="a" style="left:588px;top:956px;width:91px;height:16px;background:#1c1c1c;"></div>
<span class="t " style="left:595px;top:958.72px;font-size:11px;color:#d4d4d4;">None</span>
<svg class="a" style="left:665px;top:961px;" width="9" height="5" viewBox="0 0 9 5"><path d="M0 0H9L4.5 5Z" fill="#d8d8d8"/></svg>
<div class="a" style="left:698px;top:697px;width:1009px;height:268px;background:#262626;"></div>
<div class="a" style="left:698px;top:697px;width:1px;height:268px;background:#000;"></div>
<div class="a" style="left:704px;top:703px;width:979px;height:8px;background:#3f3a33;"></div>
<div class="a" style="left:704px;top:703px;width:212px;height:8px;background:#6e6e6e;"></div>
<div class="a" style="left:792px;top:703px;width:1px;height:8px;background:#e02020;"></div>
<svg class="a" style="left:700px;top:702px;" width="6" height="10" viewBox="0 0 6 10"><path d="M6 0H3Q0 0 0 5Q0 10 3 10H6Z" fill="#2ab4f0"/><path d="M3 2V8" stroke="#0a5a80"/></svg>
<svg class="a" style="left:916px;top:702px;" width="6" height="10" viewBox="0 0 6 10"><path d="M0 0H3Q6 0 6 5Q6 10 3 10H0Z" fill="#2ab4f0"/><path d="M3 2V8" stroke="#0a5a80"/></svg>
<div class="a" style="left:699px;top:712px;width:990px;height:20px;background:#262626;"></div>
<div class="a" style="left:706px;top:726px;width:1px;height:6px;background:#8a8a8a;"></div>
<span class="t " style="left:695.5px;top:714.46px;font-size:10.5px;color:#b0b0b0;letter-spacing:-0.4px">0:00f</span>
<div class="a" style="left:797px;top:726px;width:1px;height:6px;background:#8a8a8a;"></div>
<span class="t " style="left:797.5px;top:714.46px;font-size:10.5px;color:#b0b0b0;letter-spacing:-0.4px;transform:translateX(-50%)">05f</span>
<div class="a" style="left:889px;top:726px;width:1px;height:6px;background:#8a8a8a;"></div>
<span class="t " style="left:889px;top:714.46px;font-size:10.5px;color:#b0b0b0;letter-spacing:-0.4px;transform:translateX(-50%)">10f</span>
<div class="a" style="left:980px;top:726px;width:1px;height:6px;background:#8a8a8a;"></div>
<span class="t " style="left:980px;top:714.46px;font-size:10.5px;color:#b0b0b0;letter-spacing:-0.4px;transform:translateX(-50%)">15f</span>
<div class="a" style="left:1071px;top:726px;width:1px;height:6px;background:#8a8a8a;"></div>
<span class="t " style="left:1071.5px;top:714.46px;font-size:10.5px;color:#b0b0b0;letter-spacing:-0.4px;transform:translateX(-50%)">20f</span>
<div class="a" style="left:1162px;top:722px;width:1px;height:10px;background:#8a8a8a;"></div>
<span class="t " style="left:1162.5px;top:714.46px;font-size:10.5px;color:#b0b0b0;letter-spacing:-0.4px;transform:translateX(-50%)">01:00f</span>
<div class="a" style="left:1253px;top:726px;width:1px;height:6px;background:#8a8a8a;"></div>
<span class="t " style="left:1253.5px;top:714.46px;font-size:10.5px;color:#b0b0b0;letter-spacing:-0.4px;transform:translateX(-50%)">05f</span>
<div class="a" style="left:1345px;top:726px;width:1px;height:6px;background:#8a8a8a;"></div>
<span class="t " style="left:1345px;top:714.46px;font-size:10.5px;color:#b0b0b0;letter-spacing:-0.4px;transform:translateX(-50%)">10f</span>
<div class="a" style="left:1436px;top:726px;width:1px;height:6px;background:#8a8a8a;"></div>
<span class="t " style="left:1436px;top:714.46px;font-size:10.5px;color:#b0b0b0;letter-spacing:-0.4px;transform:translateX(-50%)">15f</span>
<div class="a" style="left:1527px;top:726px;width:1px;height:6px;background:#8a8a8a;"></div>
<span class="t " style="left:1527px;top:714.46px;font-size:10.5px;color:#b0b0b0;letter-spacing:-0.4px;transform:translateX(-50%)">20f</span>
<div class="a" style="left:1619px;top:722px;width:1px;height:10px;background:#8a8a8a;"></div>
<span class="t " style="left:1619px;top:714.46px;font-size:10.5px;color:#b0b0b0;letter-spacing:-0.4px;transform:translateX(-50%)">02:00f</span>
<div class="a" style="left:690px;top:712px;width:8px;height:20px;background:#262626;"></div>
<div class="a" style="left:698px;top:712px;width:1px;height:20px;background:#000;"></div>
<div class="a" style="left:699px;top:732px;width:990px;height:15px;background:#656565;"></div>
<svg class="a" style="left:700px;top:733px;" width="6" height="14" viewBox="0 0 6 14"><path d="M6 0H3Q0 0 0 7Q0 14 3 14H6Z" fill="#2ab4f0"/><path d="M3 2V12" stroke="#0a5a80"/></svg>
<div class="a" style="left:699px;top:747px;width:990px;height:1px;background:#000;"></div>
<div class="a" style="left:699px;top:748px;width:990px;height:3px;background:#1e1e1e;"></div>
<div class="a" style="left:1107px;top:748px;width:582px;height:3px;background:#1ac42a;"></div>
<div class="a" style="left:699px;top:751px;width:990px;height:1px;background:#000;"></div>
<div class="a" style="left:1689px;top:697px;width:18px;height:268px;background:#262626;"></div>
<svg class="a" style="left:1692px;top:734px;" width="10" height="14" viewBox="0 0 10 14"><path d="M0.5 0.5H9.5V9L5 13.5L0.5 9Z" fill="#6a6a6a" stroke="#c8c8c8"/></svg>
<div class="a" style="left:699px;top:752px;width:7px;height:16px;background:#3a3a3a;"></div>
<div class="a" style="left:699px;top:768px;width:990px;height:1px;background:#1c1c1c;"></div>
<div class="a" style="left:706px;top:752px;width:983px;height:16px;background:#a69677;"></div>
<div class="a" style="left:1107px;top:752px;width:19px;height:16px;background:rgba(255,255,255,0.09);"></div>
<div class="a" style="left:699px;top:769px;width:7px;height:16px;background:#2e2e2e;"></div>
<div class="a" style="left:699px;top:785px;width:990px;height:1px;background:#1c1c1c;"></div>
<div class="a" style="left:706px;top:769px;width:983px;height:16px;background:#746a58;"></div>
<div class="a" style="left:1107px;top:769px;width:19px;height:16px;background:rgba(255,255,255,0.09);"></div>
<div class="a" style="left:699px;top:786px;width:7px;height:16px;background:#2e2e2e;"></div>
<div class="a" style="left:699px;top:802px;width:990px;height:1px;background:#1c1c1c;"></div>
<div class="a" style="left:706px;top:786px;width:983px;height:16px;background:#66366f;"></div>
<div class="a" style="left:1107px;top:786px;width:19px;height:16px;background:rgba(255,255,255,0.09);"></div>
<div class="a" style="left:699px;top:803px;width:7px;height:16px;background:#2e2e2e;"></div>
<div class="a" style="left:699px;top:819px;width:990px;height:1px;background:#1c1c1c;"></div>
<div class="a" style="left:706px;top:803px;width:983px;height:16px;background:#7b3c3c;"></div>
<div class="a" style="left:1107px;top:803px;width:19px;height:16px;background:rgba(255,255,255,0.09);"></div>
<div class="a" style="left:699px;top:820px;width:7px;height:16px;background:#2a2a2a;"></div>
<div class="a" style="left:699px;top:836px;width:990px;height:1px;background:#1c1c1c;"></div>
<div class="a" style="left:706px;top:820px;width:983px;height:16px;background:#333333;"></div>
<div class="a" style="left:1107px;top:820px;width:19px;height:16px;background:rgba(255,255,255,0.09);"></div>
<div class="a" style="left:699px;top:837px;width:7px;height:16px;background:#2a2a2a;"></div>
<div class="a" style="left:699px;top:853px;width:990px;height:1px;background:#1c1c1c;"></div>
<div class="a" style="left:706px;top:837px;width:983px;height:16px;background:#333333;"></div>
<div class="a" style="left:1107px;top:837px;width:19px;height:16px;background:rgba(255,255,255,0.09);"></div>
<div class="a" style="left:699px;top:854px;width:7px;height:16px;background:#2a2a2a;"></div>
<div class="a" style="left:699px;top:870px;width:990px;height:1px;background:#1c1c1c;"></div>
<div class="a" style="left:706px;top:854px;width:983px;height:16px;background:#333333;"></div>
<div class="a" style="left:1107px;top:854px;width:19px;height:16px;background:rgba(255,255,255,0.09);"></div>
<div class="a" style="left:699px;top:871px;width:7px;height:16px;background:#2a2a2a;"></div>
<div class="a" style="left:699px;top:887px;width:990px;height:1px;background:#1c1c1c;"></div>
<div class="a" style="left:706px;top:871px;width:983px;height:16px;background:#333333;"></div>
<div class="a" style="left:1107px;top:871px;width:19px;height:16px;background:rgba(255,255,255,0.09);"></div>
<div class="a" style="left:699px;top:888px;width:7px;height:16px;background:#2a2a2a;"></div>
<div class="a" style="left:699px;top:904px;width:990px;height:1px;background:#1c1c1c;"></div>
<div class="a" style="left:706px;top:888px;width:983px;height:16px;background:#333333;"></div>
<div class="a" style="left:1107px;top:888px;width:19px;height:16px;background:rgba(255,255,255,0.09);"></div>
<div class="a" style="left:699px;top:905px;width:7px;height:16px;background:#2e2e2e;"></div>
<div class="a" style="left:699px;top:921px;width:990px;height:1px;background:#1c1c1c;"></div>
<div class="a" style="left:706px;top:905px;width:983px;height:16px;background:#73738a;"></div>
<div class="a" style="left:1107px;top:905px;width:19px;height:16px;background:rgba(255,255,255,0.09);"></div>
<div class="a" style="left:699px;top:922px;width:7px;height:16px;background:#2e2e2e;"></div>
<div class="a" style="left:699px;top:938px;width:990px;height:1px;background:#1c1c1c;"></div>
<div class="a" style="left:706px;top:922px;width:983px;height:16px;background:#73738a;"></div>
<div class="a" style="left:1107px;top:922px;width:19px;height:16px;background:rgba(255,255,255,0.09);"></div>
<div class="a" style="left:699px;top:939px;width:7px;height:16px;background:#2e2e2e;"></div>
<div class="a" style="left:699px;top:955px;width:990px;height:1px;background:#1c1c1c;"></div>
<div class="a" style="left:706px;top:939px;width:983px;height:16px;background:#73738a;"></div>
<div class="a" style="left:1107px;top:939px;width:19px;height:16px;background:rgba(255,255,255,0.09);"></div>
<div class="a" style="left:699px;top:956px;width:7px;height:16px;background:#2e2e2e;"></div>
<div class="a" style="left:699px;top:972px;width:990px;height:1px;background:#1c1c1c;"></div>
<div class="a" style="left:706px;top:956px;width:983px;height:16px;background:#73738a;"></div>
<div class="a" style="left:1107px;top:956px;width:19px;height:16px;background:rgba(255,255,255,0.09);"></div>
<svg class="a" style="left:706px;top:752px;" width="983" height="33" viewBox="0 0 983 33"><defs><filter id="nz" x="0" y="0" width="100%" height="100%"><feTurbulence type="fractalNoise" baseFrequency="0.8" numOctaves="2" seed="3"/><feColorMatrix type="matrix" values="0 0 0 0 0  0 0 0 0 0  0 0 0 0 0  0 0 0 -2.2 1.4"/></filter></defs><rect x="0" y="0" width="983" height="16" filter="url(#nz)" opacity="0.16"/><rect x="0" y="0" width="983" height="1" fill="#ddd2ba"/><rect x="0" y="0" width="1" height="16" fill="#ddd2ba"/></svg>
<svg class="a" style="left:707px;top:753px;" width="7" height="7" viewBox="0 0 7 7"><path d="M0 0H7Q0 0 0 7Z" fill="#111"/></svg>
<svg class="a" style="left:706px;top:769px;" width="8" height="8" viewBox="0 0 8 8"><path d="M0 0H8Q0 0 0 8Z" fill="#222"/></svg>
<svg class="a" style="left:1103px;top:822px;" width="9" height="13" viewBox="0 0 9 13"><path d="M1 1.2Q5.5 1.2 5.5 4Q5.5 1.2 8 1.2M5.5 4V9M1 11.8Q5.5 11.8 5.5 9Q5.5 11.8 8 11.8" fill="none" stroke="#d8d8d8" stroke-width="1.2"/></svg>
<svg class="a" style="left:1103px;top:856px;" width="9" height="13" viewBox="0 0 9 13"><path d="M1 1.2Q5.5 1.2 5.5 4Q5.5 1.2 8 1.2M5.5 4V9M1 11.8Q5.5 11.8 5.5 9Q5.5 11.8 8 11.8" fill="none" stroke="#d8d8d8" stroke-width="1.2"/></svg>
<svg class="a" style="left:1103px;top:873px;" width="9" height="13" viewBox="0 0 9 13"><path d="M1 1.2Q5.5 1.2 5.5 4Q5.5 1.2 8 1.2M5.5 4V9M1 11.8Q5.5 11.8 5.5 9Q5.5 11.8 8 11.8" fill="none" stroke="#d8d8d8" stroke-width="1.2"/></svg>
<svg class="a" style="left:1103px;top:890px;" width="9" height="13" viewBox="0 0 9 13"><path d="M1 1.2Q5.5 1.2 5.5 4Q5.5 1.2 8 1.2M5.5 4V9M1 11.8Q5.5 11.8 5.5 9Q5.5 11.8 8 11.8" fill="none" stroke="#d8d8d8" stroke-width="1.2"/></svg>
<svg class="a" style="left:1085px;top:840px;" width="10" height="10" viewBox="0 0 10 10"><rect x="0.5" y="0.5" width="9" height="9" fill="#555" stroke="#c8c8c8"/><rect x="5" y="1" width="4" height="8" fill="#c8c8c8"/></svg>
<svg class="a" style="left:1103px;top:840px;" width="10" height="10" viewBox="0 0 10 10"><rect x="0.5" y="0.5" width="9" height="9" fill="none" stroke="#c8c8c8"/></svg>
<svg class="a" style="left:1101px;top:716px;" width="13" height="15" viewBox="0 0 13 15"><path d="M0.5 0.5H12.5V8L6.5 14.5L0.5 8Z" fill="#2ab4f0" stroke="#1a7ab0"/><path d="M4 2V5M6.5 2V5M9 2V5M6.5 7V14" stroke="#0a3a50"/></svg>
<div class="a" style="left:1107px;top:730px;width:1px;height:235px;background:#e21818;"></div>
<div class="a" style="left:1689px;top:752px;width:17px;height:213px;background:#161616;"></div>
<div class="a" style="left:1689px;top:752px;width:17px;height:17px;background:#2a2a2a;"></div>
<svg class="a" style="left:1690px;top:755px;" width="15" height="13" viewBox="0 0 15 13"><circle cx="6" cy="5.5" r="5" fill="#8a8a8a"/><rect x="6.5" y="4.5" width="7.5" height="6.5" fill="#2a2a2a" stroke="#d0d0d0"/><path d="M1 12.5L4.5 6.5L8 12.5Z" fill="#2a2a2a" stroke="#d0d0d0"/></svg>
<svg class="a" style="left:876px;top:938px;" width="42" height="24" viewBox="0 0 42 24"><path d="M11 1L20.5 6.5V17L11 22.5L1.5 17V6.5Z" fill="#a9a9b6"/><path d="M4.5 6V13Q4.5 18.5 8.5 18.5Q12.5 18.5 12.5 13V6" fill="none" stroke="#73738a" stroke-width="2.6"/><path d="M16 6V18.5" stroke="#73738a" stroke-width="2.4"/><rect x="23.5" y="11.5" width="1.6" height="1.2" fill="#a9a9b6"/><path d="M33 9.5H29.5Q27.5 9.5 27.5 12V13Q27.5 15.5 29.5 15.5H33M34.5 15.5V11Q34.5 9.5 37 9.5Q39.5 9.5 39.5 11V15.5" fill="none" stroke="#a9a9b6" stroke-width="1.3"/></svg></body></html>
